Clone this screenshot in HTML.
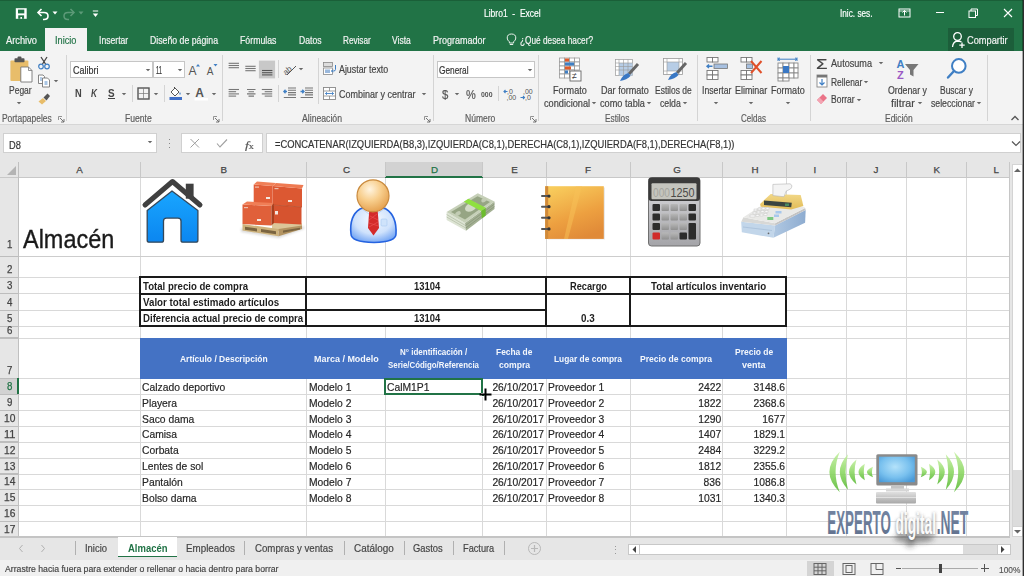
<!DOCTYPE html>
<html><head><meta charset="utf-8"><style>
html,body{margin:0;padding:0;width:1024px;height:576px;overflow:hidden;background:#fff;}
body{position:relative;font-family:"Liberation Sans",sans-serif;}
</style></head><body>
<div style="position:absolute;left:0.00px;top:0.00px;width:1024.00px;height:51.25px;background:#217346;"></div>
<div style="position:absolute;left:0.00px;top:0.00px;width:1024.00px;height:1.20px;background:#1a5f38;"></div>
<div style="position:absolute;left:45.25px;top:28.10px;width:42.00px;height:23.15px;background:#f3f3f3;"></div>
<div style="position:absolute;left:947.50px;top:28.00px;width:66.10px;height:23.25px;background:#1c5e3a;"></div>
<div id="t0" style="position:absolute;left:483.60px;top:8.36px;font-size:10.5px;line-height:10.5px;font-family:'Liberation Sans', sans-serif;font-weight:400;color:#ffffff;white-space:nowrap;transform:scaleX(0.8089);transform-origin:0 0;-webkit-text-stroke:0.18px #ffffff;">Libro1&nbsp;&nbsp;-&nbsp;&nbsp;Excel</div>
<div id="t1" style="position:absolute;left:839.50px;top:8.11px;font-size:10.5px;line-height:10.5px;font-family:'Liberation Sans', sans-serif;font-weight:400;color:#ffffff;white-space:nowrap;transform:scaleX(0.7843);transform-origin:0 0;-webkit-text-stroke:0.18px #ffffff;">Inic. ses.</div>
<div id="t2" style="position:absolute;left:6.00px;top:35.57px;font-size:10.2px;line-height:10.2px;font-family:'Liberation Sans', sans-serif;font-weight:400;color:#f4f4f4;white-space:nowrap;transform:scaleX(0.9122);transform-origin:0 0;-webkit-text-stroke:0.18px #f4f4f4;">Archivo</div>
<div id="t3" style="position:absolute;left:98.75px;top:35.57px;font-size:10.2px;line-height:10.2px;font-family:'Liberation Sans', sans-serif;font-weight:400;color:#f4f4f4;white-space:nowrap;transform:scaleX(0.8467);transform-origin:0 0;-webkit-text-stroke:0.18px #f4f4f4;">Insertar</div>
<div id="t4" style="position:absolute;left:150.00px;top:35.57px;font-size:10.2px;line-height:10.2px;font-family:'Liberation Sans', sans-serif;font-weight:400;color:#f4f4f4;white-space:nowrap;transform:scaleX(0.8575);transform-origin:0 0;-webkit-text-stroke:0.18px #f4f4f4;">Diseño de página</div>
<div id="t5" style="position:absolute;left:240.00px;top:35.57px;font-size:10.2px;line-height:10.2px;font-family:'Liberation Sans', sans-serif;font-weight:400;color:#f4f4f4;white-space:nowrap;transform:scaleX(0.8595);transform-origin:0 0;-webkit-text-stroke:0.18px #f4f4f4;">Fórmulas</div>
<div id="t6" style="position:absolute;left:298.50px;top:35.57px;font-size:10.2px;line-height:10.2px;font-family:'Liberation Sans', sans-serif;font-weight:400;color:#f4f4f4;white-space:nowrap;transform:scaleX(0.8451);transform-origin:0 0;-webkit-text-stroke:0.18px #f4f4f4;">Datos</div>
<div id="t7" style="position:absolute;left:342.75px;top:35.57px;font-size:10.2px;line-height:10.2px;font-family:'Liberation Sans', sans-serif;font-weight:400;color:#f4f4f4;white-space:nowrap;transform:scaleX(0.8033);transform-origin:0 0;-webkit-text-stroke:0.18px #f4f4f4;">Revisar</div>
<div id="t8" style="position:absolute;left:392.25px;top:35.57px;font-size:10.2px;line-height:10.2px;font-family:'Liberation Sans', sans-serif;font-weight:400;color:#f4f4f4;white-space:nowrap;transform:scaleX(0.8345);transform-origin:0 0;-webkit-text-stroke:0.18px #f4f4f4;">Vista</div>
<div id="t9" style="position:absolute;left:433.00px;top:35.57px;font-size:10.2px;line-height:10.2px;font-family:'Liberation Sans', sans-serif;font-weight:400;color:#f4f4f4;white-space:nowrap;transform:scaleX(0.8828);transform-origin:0 0;-webkit-text-stroke:0.18px #f4f4f4;">Programador</div>
<div id="t10" style="position:absolute;left:520.25px;top:35.57px;font-size:10.2px;line-height:10.2px;font-family:'Liberation Sans', sans-serif;font-weight:400;color:#f4f4f4;white-space:nowrap;transform:scaleX(0.8107);transform-origin:0 0;-webkit-text-stroke:0.18px #f4f4f4;">¿Qué desea hacer?</div>
<div id="t11" style="position:absolute;left:55.00px;top:35.57px;font-size:10.2px;line-height:10.2px;font-family:'Liberation Sans', sans-serif;font-weight:400;color:#217346;white-space:nowrap;transform:scaleX(0.9035);transform-origin:0 0;-webkit-text-stroke:0.18px #217346;">Inicio</div>
<div id="t12" style="position:absolute;left:967.00px;top:35.57px;font-size:10.2px;line-height:10.2px;font-family:'Liberation Sans', sans-serif;font-weight:400;color:#f4f4f4;white-space:nowrap;transform:scaleX(0.9076);transform-origin:0 0;-webkit-text-stroke:0.18px #f4f4f4;">Compartir</div>
<div style="position:absolute;left:0.00px;top:51.25px;width:1024.00px;height:73.55px;background:#f3f3f3;"></div>
<div style="position:absolute;left:0.00px;top:124.20px;width:1024.00px;height:1.20px;background:#d6d6d6;"></div>
<div style="position:absolute;left:0.00px;top:125.40px;width:1024.00px;height:36.60px;background:#e6e6e6;"></div>
<div style="position:absolute;left:66.20px;top:55.00px;width:1.00px;height:66.00px;background:#d4d4d4;"></div>
<div style="position:absolute;left:221.90px;top:55.00px;width:1.00px;height:66.00px;background:#d4d4d4;"></div>
<div style="position:absolute;left:433.10px;top:55.00px;width:1.00px;height:66.00px;background:#d4d4d4;"></div>
<div style="position:absolute;left:538.25px;top:55.00px;width:1.00px;height:66.00px;background:#d4d4d4;"></div>
<div style="position:absolute;left:696.70px;top:55.00px;width:1.00px;height:66.00px;background:#d4d4d4;"></div>
<div style="position:absolute;left:810.00px;top:55.00px;width:1.00px;height:66.00px;background:#d4d4d4;"></div>
<div style="position:absolute;left:986.50px;top:55.00px;width:1.00px;height:66.00px;background:#d4d4d4;"></div>
<div style="position:absolute;left:131.50px;top:85.00px;width:1.00px;height:17.00px;background:#d4d4d4;"></div>
<div style="position:absolute;left:163.80px;top:85.00px;width:1.00px;height:17.00px;background:#d4d4d4;"></div>
<div style="position:absolute;left:278.10px;top:60.00px;width:1.00px;height:18.00px;background:#d4d4d4;"></div>
<div style="position:absolute;left:278.10px;top:85.00px;width:1.00px;height:17.00px;background:#d4d4d4;"></div>
<div style="position:absolute;left:318.25px;top:58.00px;width:1.00px;height:46.00px;background:#d4d4d4;"></div>
<div style="position:absolute;left:498.40px;top:86.00px;width:1.00px;height:15.00px;background:#d4d4d4;"></div>
<div id="t13" style="position:absolute;left:2.00px;top:113.77px;font-size:10.2px;line-height:10.2px;font-family:'Liberation Sans', sans-serif;font-weight:400;color:#5c5c5c;white-space:nowrap;transform:scaleX(0.8277);transform-origin:0 0;-webkit-text-stroke:0.18px #5c5c5c;">Portapapeles</div>
<div id="t14" style="position:absolute;left:125.00px;top:113.77px;font-size:10.2px;line-height:10.2px;font-family:'Liberation Sans', sans-serif;font-weight:400;color:#5c5c5c;white-space:nowrap;transform:scaleX(0.8449);transform-origin:0 0;-webkit-text-stroke:0.18px #5c5c5c;">Fuente</div>
<div id="t15" style="position:absolute;left:301.70px;top:113.77px;font-size:10.2px;line-height:10.2px;font-family:'Liberation Sans', sans-serif;font-weight:400;color:#5c5c5c;white-space:nowrap;transform:scaleX(0.8508);transform-origin:0 0;-webkit-text-stroke:0.18px #5c5c5c;">Alineación</div>
<div id="t16" style="position:absolute;left:464.70px;top:113.77px;font-size:10.2px;line-height:10.2px;font-family:'Liberation Sans', sans-serif;font-weight:400;color:#5c5c5c;white-space:nowrap;transform:scaleX(0.8362);transform-origin:0 0;-webkit-text-stroke:0.18px #5c5c5c;">Número</div>
<div id="t17" style="position:absolute;left:605.30px;top:113.77px;font-size:10.2px;line-height:10.2px;font-family:'Liberation Sans', sans-serif;font-weight:400;color:#5c5c5c;white-space:nowrap;transform:scaleX(0.8096);transform-origin:0 0;-webkit-text-stroke:0.18px #5c5c5c;">Estilos</div>
<div id="t18" style="position:absolute;left:741.25px;top:113.77px;font-size:10.2px;line-height:10.2px;font-family:'Liberation Sans', sans-serif;font-weight:400;color:#5c5c5c;white-space:nowrap;transform:scaleX(0.7882);transform-origin:0 0;-webkit-text-stroke:0.18px #5c5c5c;">Celdas</div>
<div id="t19" style="position:absolute;left:884.90px;top:113.77px;font-size:10.2px;line-height:10.2px;font-family:'Liberation Sans', sans-serif;font-weight:400;color:#5c5c5c;white-space:nowrap;transform:scaleX(0.8318);transform-origin:0 0;-webkit-text-stroke:0.18px #5c5c5c;">Edición</div>
<div id="t20" style="position:absolute;left:8.60px;top:86.07px;font-size:10.2px;line-height:10.2px;font-family:'Liberation Sans', sans-serif;font-weight:400;color:#444444;white-space:nowrap;transform:scaleX(0.8331);transform-origin:0 0;-webkit-text-stroke:0.18px #444444;">Pegar</div>
<div id="t21" style="position:absolute;left:553.20px;top:86.07px;font-size:10.2px;line-height:10.2px;font-family:'Liberation Sans', sans-serif;font-weight:400;color:#444444;white-space:nowrap;transform:scaleX(0.8909);transform-origin:0 0;-webkit-text-stroke:0.18px #444444;">Formato</div>
<div id="t22" style="position:absolute;left:543.90px;top:98.57px;font-size:10.2px;line-height:10.2px;font-family:'Liberation Sans', sans-serif;font-weight:400;color:#444444;white-space:nowrap;transform:scaleX(0.9042);transform-origin:0 0;-webkit-text-stroke:0.18px #444444;">condicional</div>
<div id="t23" style="position:absolute;left:601.10px;top:86.07px;font-size:10.2px;line-height:10.2px;font-family:'Liberation Sans', sans-serif;font-weight:400;color:#444444;white-space:nowrap;transform:scaleX(0.8904);transform-origin:0 0;-webkit-text-stroke:0.18px #444444;">Dar formato</div>
<div id="t24" style="position:absolute;left:600.00px;top:98.57px;font-size:10.2px;line-height:10.2px;font-family:'Liberation Sans', sans-serif;font-weight:400;color:#444444;white-space:nowrap;transform:scaleX(0.9008);transform-origin:0 0;-webkit-text-stroke:0.18px #444444;">como tabla</div>
<div id="t25" style="position:absolute;left:655.00px;top:86.07px;font-size:10.2px;line-height:10.2px;font-family:'Liberation Sans', sans-serif;font-weight:400;color:#444444;white-space:nowrap;transform:scaleX(0.8308);transform-origin:0 0;-webkit-text-stroke:0.18px #444444;">Estilos de</div>
<div id="t26" style="position:absolute;left:660.00px;top:98.57px;font-size:10.2px;line-height:10.2px;font-family:'Liberation Sans', sans-serif;font-weight:400;color:#444444;white-space:nowrap;transform:scaleX(0.8539);transform-origin:0 0;-webkit-text-stroke:0.18px #444444;">celda</div>
<div id="t27" style="position:absolute;left:701.70px;top:86.07px;font-size:10.2px;line-height:10.2px;font-family:'Liberation Sans', sans-serif;font-weight:400;color:#444444;white-space:nowrap;transform:scaleX(0.8510);transform-origin:0 0;-webkit-text-stroke:0.18px #444444;">Insertar</div>
<div id="t28" style="position:absolute;left:735.00px;top:86.07px;font-size:10.2px;line-height:10.2px;font-family:'Liberation Sans', sans-serif;font-weight:400;color:#444444;white-space:nowrap;transform:scaleX(0.8751);transform-origin:0 0;-webkit-text-stroke:0.18px #444444;">Eliminar</div>
<div id="t29" style="position:absolute;left:771.00px;top:86.07px;font-size:10.2px;line-height:10.2px;font-family:'Liberation Sans', sans-serif;font-weight:400;color:#444444;white-space:nowrap;transform:scaleX(0.8883);transform-origin:0 0;-webkit-text-stroke:0.18px #444444;">Formato</div>
<div id="t30" style="position:absolute;left:888.30px;top:86.07px;font-size:10.2px;line-height:10.2px;font-family:'Liberation Sans', sans-serif;font-weight:400;color:#444444;white-space:nowrap;transform:scaleX(0.8599);transform-origin:0 0;-webkit-text-stroke:0.18px #444444;">Ordenar y</div>
<div id="t31" style="position:absolute;left:891.00px;top:98.57px;font-size:10.2px;line-height:10.2px;font-family:'Liberation Sans', sans-serif;font-weight:400;color:#444444;white-space:nowrap;transform:scaleX(1.0490);transform-origin:0 0;-webkit-text-stroke:0.18px #444444;">filtrar</div>
<div id="t32" style="position:absolute;left:940.20px;top:86.07px;font-size:10.2px;line-height:10.2px;font-family:'Liberation Sans', sans-serif;font-weight:400;color:#444444;white-space:nowrap;transform:scaleX(0.8300);transform-origin:0 0;-webkit-text-stroke:0.18px #444444;">Buscar y</div>
<div id="t33" style="position:absolute;left:931.40px;top:98.57px;font-size:10.2px;line-height:10.2px;font-family:'Liberation Sans', sans-serif;font-weight:400;color:#444444;white-space:nowrap;transform:scaleX(0.8539);transform-origin:0 0;-webkit-text-stroke:0.18px #444444;">seleccionar</div>
<div id="t34" style="position:absolute;left:830.70px;top:58.97px;font-size:10.2px;line-height:10.2px;font-family:'Liberation Sans', sans-serif;font-weight:400;color:#444444;white-space:nowrap;transform:scaleX(0.8937);transform-origin:0 0;-webkit-text-stroke:0.18px #444444;">Autosuma</div>
<div id="t35" style="position:absolute;left:830.70px;top:77.67px;font-size:10.2px;line-height:10.2px;font-family:'Liberation Sans', sans-serif;font-weight:400;color:#444444;white-space:nowrap;transform:scaleX(0.8247);transform-origin:0 0;-webkit-text-stroke:0.18px #444444;">Rellenar</div>
<div id="t36" style="position:absolute;left:830.70px;top:95.47px;font-size:10.2px;line-height:10.2px;font-family:'Liberation Sans', sans-serif;font-weight:400;color:#444444;white-space:nowrap;transform:scaleX(0.8336);transform-origin:0 0;-webkit-text-stroke:0.18px #444444;">Borrar</div>
<div id="t37" style="position:absolute;left:338.60px;top:65.17px;font-size:10.2px;line-height:10.2px;font-family:'Liberation Sans', sans-serif;font-weight:400;color:#444444;white-space:nowrap;transform:scaleX(0.8689);transform-origin:0 0;-webkit-text-stroke:0.18px #444444;">Ajustar texto</div>
<div id="t38" style="position:absolute;left:338.60px;top:89.97px;font-size:10.2px;line-height:10.2px;font-family:'Liberation Sans', sans-serif;font-weight:400;color:#444444;white-space:nowrap;transform:scaleX(0.8820);transform-origin:0 0;-webkit-text-stroke:0.18px #444444;">Combinar y centrar</div>
<svg style="position:absolute;left:16.00px;top:100.70px;" width="6" height="4" viewBox="0 0 6 4"><path d="M0.80 1 L5.20 1 L3 3.20 Z" fill="#666"/></svg>
<svg style="position:absolute;left:53.00px;top:79.00px;" width="6" height="4" viewBox="0 0 6 4"><path d="M0.80 1 L5.20 1 L3 3.20 Z" fill="#666"/></svg>
<svg style="position:absolute;left:120.50px;top:92.00px;" width="6" height="4" viewBox="0 0 6 4"><path d="M0.80 1 L5.20 1 L3 3.20 Z" fill="#666"/></svg>
<svg style="position:absolute;left:153.00px;top:92.00px;" width="6" height="4" viewBox="0 0 6 4"><path d="M0.80 1 L5.20 1 L3 3.20 Z" fill="#666"/></svg>
<svg style="position:absolute;left:185.00px;top:92.00px;" width="6" height="4" viewBox="0 0 6 4"><path d="M0.80 1 L5.20 1 L3 3.20 Z" fill="#666"/></svg>
<svg style="position:absolute;left:211.00px;top:92.00px;" width="6" height="4" viewBox="0 0 6 4"><path d="M0.80 1 L5.20 1 L3 3.20 Z" fill="#666"/></svg>
<svg style="position:absolute;left:298.00px;top:67.00px;" width="6" height="4" viewBox="0 0 6 4"><path d="M0.80 1 L5.20 1 L3 3.20 Z" fill="#666"/></svg>
<svg style="position:absolute;left:421.30px;top:92.00px;" width="6" height="4" viewBox="0 0 6 4"><path d="M0.80 1 L5.20 1 L3 3.20 Z" fill="#666"/></svg>
<svg style="position:absolute;left:454.20px;top:92.00px;" width="6" height="4" viewBox="0 0 6 4"><path d="M0.80 1 L5.20 1 L3 3.20 Z" fill="#666"/></svg>
<svg style="position:absolute;left:590.90px;top:100.50px;" width="6" height="4" viewBox="0 0 6 4"><path d="M0.80 1 L5.20 1 L3 3.20 Z" fill="#666"/></svg>
<svg style="position:absolute;left:646.00px;top:100.50px;" width="6" height="4" viewBox="0 0 6 4"><path d="M0.80 1 L5.20 1 L3 3.20 Z" fill="#666"/></svg>
<svg style="position:absolute;left:682.00px;top:100.50px;" width="6" height="4" viewBox="0 0 6 4"><path d="M0.80 1 L5.20 1 L3 3.20 Z" fill="#666"/></svg>
<svg style="position:absolute;left:713.25px;top:101.00px;" width="6" height="4" viewBox="0 0 6 4"><path d="M0.80 1 L5.20 1 L3 3.20 Z" fill="#666"/></svg>
<svg style="position:absolute;left:748.00px;top:101.00px;" width="6" height="4" viewBox="0 0 6 4"><path d="M0.80 1 L5.20 1 L3 3.20 Z" fill="#666"/></svg>
<svg style="position:absolute;left:784.60px;top:101.00px;" width="6" height="4" viewBox="0 0 6 4"><path d="M0.80 1 L5.20 1 L3 3.20 Z" fill="#666"/></svg>
<svg style="position:absolute;left:878.00px;top:61.00px;" width="6" height="4" viewBox="0 0 6 4"><path d="M0.80 1 L5.20 1 L3 3.20 Z" fill="#666"/></svg>
<svg style="position:absolute;left:863.00px;top:79.50px;" width="6" height="4" viewBox="0 0 6 4"><path d="M0.80 1 L5.20 1 L3 3.20 Z" fill="#666"/></svg>
<svg style="position:absolute;left:855.50px;top:97.50px;" width="6" height="4" viewBox="0 0 6 4"><path d="M0.80 1 L5.20 1 L3 3.20 Z" fill="#666"/></svg>
<svg style="position:absolute;left:916.60px;top:100.50px;" width="6" height="4" viewBox="0 0 6 4"><path d="M0.80 1 L5.20 1 L3 3.20 Z" fill="#666"/></svg>
<svg style="position:absolute;left:976.30px;top:100.50px;" width="6" height="4" viewBox="0 0 6 4"><path d="M0.80 1 L5.20 1 L3 3.20 Z" fill="#666"/></svg>
<div style="position:absolute;left:70.25px;top:60.60px;width:83.15px;height:17.80px;background:#ffffff;box-sizing:border-box;border:1px solid #c6c6c6;"></div>
<div style="position:absolute;left:152.90px;top:60.60px;width:32.60px;height:17.80px;background:#ffffff;box-sizing:border-box;border:1px solid #c6c6c6;"></div>
<div style="position:absolute;left:437.00px;top:60.60px;width:97.60px;height:17.80px;background:#ffffff;box-sizing:border-box;border:1px solid #c6c6c6;"></div>
<div id="t39" style="position:absolute;left:72.60px;top:64.91px;font-size:10.5px;line-height:10.5px;font-family:'Liberation Sans', sans-serif;font-weight:400;color:#333;white-space:nowrap;transform:scaleX(0.8533);transform-origin:0 0;-webkit-text-stroke:0.18px #333;">Calibri</div>
<div id="t40" style="position:absolute;left:156.00px;top:64.91px;font-size:10.5px;line-height:10.5px;font-family:'Liberation Sans', sans-serif;font-weight:400;color:#333;white-space:nowrap;transform:scaleX(0.5501);transform-origin:0 0;-webkit-text-stroke:0.18px #333;">11</div>
<div id="t41" style="position:absolute;left:439.40px;top:64.91px;font-size:10.5px;line-height:10.5px;font-family:'Liberation Sans', sans-serif;font-weight:400;color:#333;white-space:nowrap;transform:scaleX(0.7923);transform-origin:0 0;-webkit-text-stroke:0.18px #333;">General</div>
<svg style="position:absolute;left:144.75px;top:67.50px;" width="6" height="4" viewBox="0 0 6 4"><path d="M0.80 1 L5.20 1 L3 3.20 Z" fill="#666"/></svg>
<svg style="position:absolute;left:177.00px;top:67.50px;" width="6" height="4" viewBox="0 0 6 4"><path d="M0.80 1 L5.20 1 L3 3.20 Z" fill="#666"/></svg>
<svg style="position:absolute;left:526.70px;top:67.50px;" width="6" height="4" viewBox="0 0 6 4"><path d="M0.80 1 L5.20 1 L3 3.20 Z" fill="#666"/></svg>
<svg style="position:absolute;left:14.00px;top:7.00px;" width="14" height="14" viewBox="0 0 14 14"><rect x="1.8" y="1.2" width="10.9" height="10.6" fill="#fff"/><rect x="4" y="2.6" width="6.3" height="3.8" fill="#217346"/><rect x="4.2" y="8.3" width="5.9" height="3.5" fill="#217346"/><rect x="6.4" y="10" width="1.6" height="1.8" fill="#fff"/></svg>
<svg style="position:absolute;left:36.00px;top:7.00px;" width="14" height="14" viewBox="0 0 14 14"><path d="M2.5 5.5 H8 Q12 5.5 12 9 Q12 12.5 8 12.5 H7" fill="none" stroke="#fff" stroke-width="1.6"/><path d="M5.5 2 L2 5.5 L5.5 9" fill="none" stroke="#fff" stroke-width="1.6"/></svg>
<svg style="position:absolute;left:51.50px;top:11.00px;" width="6" height="4" viewBox="0 0 6 4"><path d="M0.5 0.5 H5.5 L3 3.5 Z" fill="#fff"/></svg>
<svg style="position:absolute;left:62.00px;top:7.00px;" width="14" height="14" viewBox="0 0 14 14"><path d="M11.5 5.5 H6 Q2 5.5 2 9 Q2 12.5 6 12.5 H7" fill="none" stroke="#5d9a78" stroke-width="1.5"/><path d="M8.5 2 L12 5.5 L8.5 9" fill="none" stroke="#5d9a78" stroke-width="1.5"/></svg>
<svg style="position:absolute;left:78.00px;top:11.00px;" width="6" height="4" viewBox="0 0 6 4"><path d="M0.5 0.5 H5.5 L3 3.5 Z" fill="#5d9a78"/></svg>
<svg style="position:absolute;left:92.00px;top:10.00px;" width="7" height="8" viewBox="0 0 7 8"><path d="M0.8 1 H6.2" stroke="#fff" stroke-width="1"/><path d="M0.8 3.5 H6.2 L3.5 7 Z" fill="#fff"/></svg>
<svg style="position:absolute;left:898.00px;top:8.00px;" width="13" height="10" viewBox="0 0 13 10"><rect x="1" y="1" width="11" height="8" fill="none" stroke="#fff" stroke-width="1"/><path d="M6.5 2.5 V7.5 M4.5 4.5 L6.5 2.5 L8.5 4.5" fill="none" stroke="#fff" stroke-width="1"/><path d="M1 3 H12" stroke="#fff" stroke-width="0.8"/></svg>
<div style="position:absolute;left:935.50px;top:12.30px;width:8.00px;height:1.00px;background:#ffffff;"></div>
<svg style="position:absolute;left:968.00px;top:8.00px;" width="11" height="10" viewBox="0 0 11 10"><rect x="1" y="3" width="6.5" height="6.5" fill="none" stroke="#fff" stroke-width="1"/><path d="M3 3 V1 H9.5 V7.5 H7.5" fill="none" stroke="#fff" stroke-width="1"/></svg>
<svg style="position:absolute;left:1003.00px;top:8.00px;" width="10" height="10" viewBox="0 0 10 10"><path d="M1 1 L9 9 M9 1 L1 9" stroke="#fff" stroke-width="1.1"/></svg>
<svg style="position:absolute;left:506.00px;top:33.00px;" width="11" height="13" viewBox="0 0 11 13"><path d="M5.5 1 Q9.8 1 9.8 5 Q9.8 7.2 7.6 8.8 V10 H3.4 V8.8 Q1.2 7.2 1.2 5 Q1.2 1 5.5 1 Z" fill="none" stroke="#e8f0ea" stroke-width="1"/><path d="M3.8 11.5 H7.2" stroke="#e8f0ea" stroke-width="1"/></svg>
<svg style="position:absolute;left:951.00px;top:31.00px;" width="15" height="18" viewBox="0 0 15 18"><circle cx="6.5" cy="5.5" r="3.8" fill="none" stroke="#fff" stroke-width="1.3"/><path d="M1.5 16 Q2 10.5 6.5 10 Q9 10 10.5 11" fill="none" stroke="#fff" stroke-width="1.3"/><path d="M11 11.5 V17 M8.3 14.2 H13.7" stroke="#fff" stroke-width="1.3"/></svg>
<svg style="position:absolute;left:9.00px;top:56.00px;" width="26" height="28" viewBox="0 0 26 28"><rect x="1.4" y="4.5" width="18" height="20.5" rx="1" fill="#e8bd6a"/>
<rect x="5.5" y="2.3" width="10" height="4" rx="0.8" fill="#555"/><rect x="8.5" y="0.6" width="4" height="2.5" rx="1" fill="#555"/>
<path d="M11.8 11 H19.5 L23 14.5 V26 H11.8 Z" fill="#fff" stroke="#777" stroke-width="0.9"/><path d="M19.5 11 V14.5 H23" fill="none" stroke="#777" stroke-width="0.8"/></svg>
<svg style="position:absolute;left:37.00px;top:56.00px;" width="14" height="14" viewBox="0 0 14 14"><path d="M4 1 L8.5 8 M10 1 L5.5 8" stroke="#444" stroke-width="1.3"/><circle cx="4" cy="10.5" r="2.3" fill="none" stroke="#3f7fc4" stroke-width="1.2"/><circle cx="10" cy="10.5" r="2.3" fill="none" stroke="#3f7fc4" stroke-width="1.2"/></svg>
<svg style="position:absolute;left:37.00px;top:74.00px;" width="14" height="14" viewBox="0 0 14 14"><path d="M1.5 1 H6 L7.5 2.5 V9.5 H1.5 Z" fill="#fff" stroke="#777" stroke-width="0.9"/><path d="M5.5 4 H10.5 L12.5 6 V13 H5.5 Z" fill="#fff" stroke="#777" stroke-width="0.9"/><path d="M7.5 8 H10.5 M7.5 10 H10.5" stroke="#3f7fc4" stroke-width="0.9"/><path d="M3 4 H5 M3 6 H5" stroke="#3f7fc4" stroke-width="0.8"/></svg>
<svg style="position:absolute;left:37.00px;top:92.00px;" width="14" height="14" viewBox="0 0 14 14"><path d="M1.5 9.5 L6 6 L9 9 L5 12.5 Z" fill="#e8bd6a"/><path d="M6.5 5.5 L10.5 1.5 L13 4 L9.5 8.5 Z" fill="#555"/></svg>
<svg style="position:absolute;left:188.00px;top:63.00px;" width="12" height="13" viewBox="0 0 12 13"><text x="0.5" y="11.5" font-family="Liberation Sans" font-size="12" fill="#555">A</text><path d="M8 3.5 L10 1 L12 3.5 Z" fill="#3f7fc4"/></svg>
<svg style="position:absolute;left:205.00px;top:63.00px;" width="13" height="13" viewBox="0 0 13 13"><text x="1.8" y="11.5" font-family="Liberation Sans" font-size="10" fill="#555">A</text><path d="M8.5 1 H12.5 L10.5 3.5 Z" fill="#3f7fc4"/></svg>
<div id="t42" style="position:absolute;left:75.00px;top:87.99px;font-size:11px;line-height:11px;font-family:'Liberation Sans', sans-serif;font-weight:700;color:#444;white-space:nowrap;transform:scaleX(0.8424);transform-origin:0 0;">N</div>
<div id="t43" style="position:absolute;left:91.00px;top:87.99px;font-size:11px;line-height:11px;font-family:'Liberation Sans', sans-serif;font-weight:700;color:#444;white-space:nowrap;transform:scaleX(0.7544);transform-origin:0 0;font-style:italic;">K</div>
<div id="t44" style="position:absolute;left:108.00px;top:87.99px;font-size:11px;line-height:11px;font-family:'Liberation Sans', sans-serif;font-weight:700;color:#444;white-space:nowrap;transform:scaleX(0.8987);transform-origin:0 0;">S</div>
<div style="position:absolute;left:108.00px;top:98.20px;width:7.00px;height:0.90px;background:#444;"></div>
<svg style="position:absolute;left:137.00px;top:87.00px;" width="13" height="13" viewBox="0 0 13 13"><rect x="1" y="1" width="11" height="11" fill="none" stroke="#555" stroke-width="1.4"/><path d="M6.5 1 V12 M1 6.5 H12" stroke="#777" stroke-width="0.7"/></svg>
<svg style="position:absolute;left:168.00px;top:85.00px;" width="15" height="16" viewBox="0 0 15 16"><path d="M3 7 L7 3 L11 7 L7 11 Z" fill="#fff" stroke="#444" stroke-width="0.9"/><path d="M6 2 L7 3" stroke="#444"/><path d="M12 7 Q13.5 9 12 10 Q10.5 9 12 7 Z" fill="#3f7fc4"/><rect x="1.5" y="12" width="12.5" height="3" fill="#3f6fc8"/></svg>
<svg style="position:absolute;left:194.00px;top:86.00px;" width="15" height="15" viewBox="0 0 15 15"><text x="1.2" y="11" font-family="Liberation Sans" font-weight="700" font-size="12" fill="#555">A</text><rect x="0.5" y="12" width="13.5" height="2.5" fill="#fff"/></svg>
<svg style="position:absolute;left:57.50px;top:115.50px;" width="7" height="7" viewBox="0 0 7 7"><path d="M0.5 0.5 H4 M0.5 0.5 V4" stroke="#888" stroke-width="0.9"/><path d="M2 2 L6 6 M6 3 V6 H3" fill="none" stroke="#666" stroke-width="0.9"/></svg>
<svg style="position:absolute;left:213.00px;top:115.50px;" width="7" height="7" viewBox="0 0 7 7"><path d="M0.5 0.5 H4 M0.5 0.5 V4" stroke="#888" stroke-width="0.9"/><path d="M2 2 L6 6 M6 3 V6 H3" fill="none" stroke="#666" stroke-width="0.9"/></svg>
<svg style="position:absolute;left:423.50px;top:115.50px;" width="7" height="7" viewBox="0 0 7 7"><path d="M0.5 0.5 H4 M0.5 0.5 V4" stroke="#888" stroke-width="0.9"/><path d="M2 2 L6 6 M6 3 V6 H3" fill="none" stroke="#666" stroke-width="0.9"/></svg>
<svg style="position:absolute;left:529.50px;top:115.50px;" width="7" height="7" viewBox="0 0 7 7"><path d="M0.5 0.5 H4 M0.5 0.5 V4" stroke="#888" stroke-width="0.9"/><path d="M2 2 L6 6 M6 3 V6 H3" fill="none" stroke="#666" stroke-width="0.9"/></svg>
<svg style="position:absolute;left:226.00px;top:58.00px;" width="60" height="50" viewBox="0 0 60 50"><rect x="32.9" y="2.6" width="16.2" height="17.8" fill="#c8c8c8"/><path d="M2.60 5.30 H13.00" stroke="#777" stroke-width="1.1"/><path d="M2.60 7.50 H13.00" stroke="#777" stroke-width="1.1"/><path d="M2.60 9.70 H13.00" stroke="#777" stroke-width="1.1"/><path d="M19.30 8.30 H29.70" stroke="#777" stroke-width="1.1"/><path d="M19.30 10.50 H29.70" stroke="#777" stroke-width="1.1"/><path d="M19.30 12.70 H29.70" stroke="#777" stroke-width="1.1"/><path d="M36.00 12.50 H46.40" stroke="#555" stroke-width="1.1"/><path d="M36.00 14.70 H46.40" stroke="#555" stroke-width="1.1"/><path d="M36.00 16.90 H46.40" stroke="#555" stroke-width="1.1"/><path d="M2.60 31.50 H13.00" stroke="#777" stroke-width="1.1"/><path d="M2.60 33.70 H10.10" stroke="#777" stroke-width="1.1"/><path d="M2.60 35.90 H13.00" stroke="#777" stroke-width="1.1"/><path d="M2.60 38.10 H10.10" stroke="#777" stroke-width="1.1"/><path d="M21 31.5 H29.5 M22.5 33.7 H28 M21 35.9 H29.5 M22.5 38.1 H28" stroke="#777" stroke-width="1.1"/><path d="M35.80 31.50 H46.20" stroke="#777" stroke-width="1.1"/><path d="M38.70 33.70 H46.20" stroke="#777" stroke-width="1.1"/><path d="M35.80 35.90 H46.20" stroke="#777" stroke-width="1.1"/><path d="M38.70 38.10 H46.20" stroke="#777" stroke-width="1.1"/></svg>
<svg style="position:absolute;left:283.00px;top:62.00px;" width="20" height="14" viewBox="0 0 20 14"><text x="0" y="10" font-family="Liberation Sans" font-size="8" fill="#555" transform="rotate(-40 6 8)">ab</text><path d="M4 13 L13 4" stroke="#555" stroke-width="1"/></svg>
<svg style="position:absolute;left:283.00px;top:87.00px;" width="32" height="14" viewBox="0 0 32 14"><path d="M5 1 H13 M5 3.3 H13 M5 5.6 H13 M5 7.9 H13 M0.8 10.5 H13" stroke="#777" stroke-width="1.1"/><path d="M0.8 4.5 H4 M2.5 2.8 L0.8 4.5 L2.5 6.2" fill="none" stroke="#3f7fc4" stroke-width="1.3"/><path d="M22 1 H30 M22 3.3 H30 M22 5.6 H30 M22 7.9 H30 M17.6 10.5 H30" stroke="#777" stroke-width="1.1"/><path d="M17.5 4.5 H21 M19.3 2.8 L21 4.5 L19.3 6.2" fill="none" stroke="#3f7fc4" stroke-width="1.3"/></svg>
<svg style="position:absolute;left:322.00px;top:61.00px;" width="16" height="16" viewBox="0 0 16 16"><rect x="1.5" y="1.5" width="9" height="4" fill="#ddd" stroke="#888" stroke-width="0.8"/><rect x="1.5" y="7" width="9" height="6.5" fill="#fff" stroke="#888" stroke-width="0.8"/><rect x="3" y="8.5" width="5" height="3.5" fill="#9ab8dc"/><path d="M13.5 4 V8.5 Q13.5 10 11.5 10 H9.5 M10.8 8.7 L9.5 10 L10.8 11.3" fill="none" stroke="#3f7fc4" stroke-width="1"/></svg>
<svg style="position:absolute;left:322.00px;top:86.00px;" width="15" height="15" viewBox="0 0 15 15"><rect x="1.5" y="1.5" width="12" height="12" fill="#fff" stroke="#888" stroke-width="0.9"/><path d="M1.5 5 H13.5 M1.5 10 H13.5 M7.5 1.5 V5 M7.5 10 V13.5" stroke="#888" stroke-width="0.8"/><path d="M3.5 7.5 H11.5 M5 6.2 L3.5 7.5 L5 8.8 M10 6.2 L11.5 7.5 L10 8.8" fill="none" stroke="#3f7fc4" stroke-width="0.9"/></svg>
<div id="t45" style="position:absolute;left:442.20px;top:88.92px;font-size:12.5px;line-height:12.5px;font-family:'Liberation Sans', sans-serif;font-weight:400;color:#555;white-space:nowrap;transform:scaleX(0.9061);transform-origin:0 0;-webkit-text-stroke:0.18px #555;">$</div>
<div id="t46" style="position:absolute;left:465.80px;top:88.92px;font-size:12.5px;line-height:12.5px;font-family:'Liberation Sans', sans-serif;font-weight:400;color:#555;white-space:nowrap;transform:scaleX(0.8809);transform-origin:0 0;-webkit-text-stroke:0.18px #555;">%</div>
<div id="t47" style="position:absolute;left:481.00px;top:90.65px;font-size:7.5px;line-height:7.5px;font-family:'Liberation Sans', sans-serif;font-weight:700;color:#555;white-space:nowrap;transform:scaleX(0.9189);transform-origin:0 0;">000</div>
<svg style="position:absolute;left:503.00px;top:87.00px;" width="30" height="14" viewBox="0 0 30 14"><text x="4" y="6.5" font-family="Liberation Sans" font-size="7" fill="#555">,0</text><text x="3.5" y="12.5" font-family="Liberation Sans" font-size="7" fill="#555">,00</text><path d="M1 4.5 H4.5 M2.5 3 L1 4.5 L2.5 6" fill="none" stroke="#3f7fc4" stroke-width="1.1"/><text x="20" y="6.5" font-family="Liberation Sans" font-size="7" fill="#555">,00</text><text x="22" y="12.5" font-family="Liberation Sans" font-size="7" fill="#555">,0</text><path d="M17.5 10.5 H21.5 M20 9 L21.5 10.5 L20 12" fill="none" stroke="#3f7fc4" stroke-width="1.1"/></svg>
<svg style="position:absolute;left:558.00px;top:57.00px;" width="26" height="26" viewBox="0 0 26 26"><g fill="#fff" stroke="#999" stroke-width="0.8">
<rect x="1.5" y="1" width="5" height="4"/><rect x="6.5" y="1" width="5" height="4"/><rect x="11.5" y="1" width="5" height="4"/><rect x="16.5" y="1" width="5" height="4"/>
<rect x="1.5" y="5" width="5" height="4"/><rect x="6.5" y="5" width="5" height="4"/><rect x="11.5" y="5" width="5" height="4"/><rect x="16.5" y="5" width="5" height="4"/>
<rect x="1.5" y="9" width="5" height="4"/><rect x="6.5" y="9" width="5" height="4"/><rect x="11.5" y="9" width="5" height="4"/><rect x="16.5" y="9" width="5" height="4"/>
<rect x="1.5" y="13" width="5" height="4"/><rect x="6.5" y="13" width="5" height="4"/><rect x="11.5" y="13" width="5" height="4"/>
<rect x="1.5" y="17" width="5" height="4"/><rect x="6.5" y="17" width="5" height="4"/></g>
<rect x="7" y="1.5" width="4" height="3" fill="#e05a2a"/><rect x="7" y="5.5" width="9" height="3" fill="#3f7fc4"/><rect x="7" y="9.5" width="6" height="3" fill="#e05a2a"/><rect x="7" y="13.5" width="3" height="3" fill="#3f7fc4"/>
<rect x="12" y="14" width="11" height="10" fill="#fff" stroke="#666" stroke-width="0.9"/><text x="14" y="22" font-family="Liberation Sans" font-size="9" fill="#444">≠</text></svg>
<svg style="position:absolute;left:614.00px;top:58.00px;" width="26" height="26" viewBox="0 0 26 26"><g fill="#fff" stroke="#999" stroke-width="0.7"><rect x="1.5" y="1.5" width="17" height="16"/></g>
<rect x="5" y="5" width="13.5" height="12.5" fill="#b7cde6"/>
<path d="M1.5 5 H18.5 M1.5 8.5 H18.5 M1.5 12 H18.5 M5 1.5 V17.5 M9.5 1.5 V17.5 M14 1.5 V17.5" stroke="#999" stroke-width="0.6"/>
<path d="M24 6 L15 16" stroke="#666" stroke-width="3"/><path d="M14.5 15 Q9 16 6 23 Q13 22 16.5 18 Z" fill="#3a78c4"/></svg>
<svg style="position:absolute;left:662.00px;top:57.00px;" width="26" height="26" viewBox="0 0 26 26"><rect x="1.5" y="1.5" width="19" height="16" fill="#fff" stroke="#999" stroke-width="0.8"/>
<rect x="5" y="5" width="12" height="9" fill="#b7cde6"/><path d="M1.5 5 H20.5 M1.5 14 H20.5 M5 1.5 V17.5 M17 1.5 V17.5" stroke="#999" stroke-width="0.6"/>
<path d="M24 6 L15 16" stroke="#666" stroke-width="3"/><path d="M14.5 15 Q9 16 6 23 Q13 22 16.5 18 Z" fill="#3a78c4"/></svg>
<svg style="position:absolute;left:705.00px;top:56.00px;" width="24" height="26" viewBox="0 0 24 26"><g fill="#fff" stroke="#777" stroke-width="0.9"><rect x="2" y="1.5" width="5.5" height="4.5"/><rect x="7.5" y="1.5" width="5.5" height="4.5"/>
<rect x="2" y="14.5" width="5.5" height="4.5"/><rect x="7.5" y="14.5" width="5.5" height="4.5"/><rect x="2" y="19" width="5.5" height="4.5"/><rect x="7.5" y="19" width="5.5" height="4.5"/></g>
<rect x="9" y="8" width="13.5" height="4.5" fill="#a7c0e0" stroke="#777" stroke-width="0.8"/><path d="M2 10.2 H7.5 M4 8.5 L2 10.2 L4 12" fill="none" stroke="#3f7fc4" stroke-width="1.4"/></svg>
<svg style="position:absolute;left:739.00px;top:56.00px;" width="26" height="26" viewBox="0 0 26 26"><g fill="#fff" stroke="#777" stroke-width="0.9"><rect x="2" y="1.5" width="5.5" height="4.5"/><rect x="7.5" y="1.5" width="5.5" height="4.5"/>
<rect x="2" y="14.5" width="5.5" height="4.5"/><rect x="7.5" y="14.5" width="5.5" height="4.5"/><rect x="2" y="19" width="5.5" height="4.5"/><rect x="7.5" y="19" width="5.5" height="4.5"/></g>
<rect x="7.5" y="8" width="6" height="4.5" fill="#a7c0e0" stroke="#777" stroke-width="0.8"/><path d="M12 5 L22.5 17 M22.5 5 L12 17" stroke="#e0502a" stroke-width="2"/></svg>
<svg style="position:absolute;left:776.00px;top:55.00px;" width="24" height="28" viewBox="0 0 24 28"><path d="M2 2.5 V6 M21 2.5 V6 M2 4.2 H21 M4 2.8 L2 4.2 L4 5.6 M19 2.8 L21 4.2 L19 5.6" fill="none" stroke="#3f7fc4" stroke-width="1"/>
<g fill="#fff" stroke="#888" stroke-width="0.9"><rect x="2" y="8" width="5" height="5"/><rect x="7" y="8" width="6" height="5"/><rect x="13" y="8" width="5" height="5"/><rect x="18" y="8" width="4" height="5"/>
<rect x="2" y="13" width="5" height="5"/><rect x="13" y="13" width="5" height="5"/><rect x="18" y="13" width="4" height="5"/>
<rect x="2" y="18" width="5" height="5"/><rect x="7" y="18" width="6" height="5"/><rect x="13" y="18" width="5" height="5"/><rect x="18" y="18" width="4" height="5"/>
<rect x="2" y="23" width="5" height="3"/><rect x="7" y="23" width="6" height="3"/></g>
<rect x="7" y="11" width="6" height="7" fill="#3a78c4"/></svg>
<div id="t48" style="position:absolute;left:816.40px;top:56.28px;font-size:15.5px;line-height:15.5px;font-family:'Liberation Sans', sans-serif;font-weight:400;color:#444;white-space:nowrap;transform:scaleX(1.2091);transform-origin:0 0;-webkit-text-stroke:0.18px #444;">Σ</div>
<svg style="position:absolute;left:816.00px;top:74.00px;" width="12" height="14" viewBox="0 0 12 14"><rect x="1" y="1" width="10" height="12" fill="#fff" stroke="#888" stroke-width="0.9"/><rect x="1" y="1" width="10" height="2.5" fill="#777"/><path d="M6 5 V11 M3.5 8.5 L6 11 L8.5 8.5" fill="none" stroke="#3f7fc4" stroke-width="1.2"/></svg>
<svg style="position:absolute;left:815.00px;top:92.00px;" width="13" height="13" viewBox="0 0 13 13"><path d="M2 8 L8 2 L12 6 L6 12 Z" fill="#ea7387"/><path d="M2 8 L4.5 5.5 L8.5 9.5 L6 12 Z" fill="#f3a4b2"/></svg>
<svg style="position:absolute;left:896.00px;top:57.00px;" width="24" height="24" viewBox="0 0 24 24"><text x="0.5" y="11" font-family="Liberation Sans" font-size="11" font-weight="700" fill="#3f7fc4">A</text><text x="1" y="22" font-family="Liberation Sans" font-size="11" font-weight="700" fill="#9b59c4">Z</text>
<path d="M9 7 H22.5 L17.5 13 V19.5 L14 17.5 V13 Z" fill="#777"/></svg>
<svg style="position:absolute;left:945.00px;top:56.00px;" width="22" height="24" viewBox="0 0 22 24"><circle cx="13.8" cy="9.9" r="6.8" fill="#fff" stroke="#3f7fc4" stroke-width="2"/><path d="M9 15 L3 21.5" stroke="#3f7fc4" stroke-width="2.4" stroke-linecap="round"/></svg>
<svg style="position:absolute;left:1010.00px;top:114.00px;" width="10" height="8" viewBox="0 0 10 8"><path d="M1.5 6 L5 2.5 L8.5 6" fill="none" stroke="#555" stroke-width="1.3"/></svg>
<div style="position:absolute;left:3.40px;top:133.25px;width:153.60px;height:20.00px;background:#ffffff;box-sizing:border-box;border:1px solid #d0d0d0;"></div>
<div id="t49" style="position:absolute;left:8.60px;top:139.91px;font-size:10.5px;line-height:10.5px;font-family:'Liberation Sans', sans-serif;font-weight:400;color:#333;white-space:nowrap;transform:scaleX(0.8856);transform-origin:0 0;-webkit-text-stroke:0.18px #333;">D8</div>
<svg style="position:absolute;left:147.00px;top:140.00px;" width="6" height="4" viewBox="0 0 6 4"><path d="M0.80 1 L5.20 1 L3 3.20 Z" fill="#666"/></svg>
<div style="position:absolute;left:168.50px;top:139.00px;width:1.20px;height:1.20px;background:#888;"></div>
<div style="position:absolute;left:168.50px;top:143.00px;width:1.20px;height:1.20px;background:#888;"></div>
<div style="position:absolute;left:168.50px;top:147.00px;width:1.20px;height:1.20px;background:#888;"></div>
<div style="position:absolute;left:180.50px;top:133.25px;width:82.00px;height:20.00px;background:#ffffff;box-sizing:border-box;border:1px solid #d0d0d0;"></div>
<div style="position:absolute;left:265.60px;top:133.25px;width:755.40px;height:20.00px;background:#ffffff;box-sizing:border-box;border:1px solid #d0d0d0;"></div>
<div id="t50" style="position:absolute;left:274.50px;top:139.78px;font-size:10.3px;line-height:10.3px;font-family:'Liberation Sans', sans-serif;font-weight:400;color:#333;white-space:nowrap;transform:scaleX(0.9104);transform-origin:0 0;-webkit-text-stroke:0.18px #333;">=CONCATENAR(IZQUIERDA(B8,3),IZQUIERDA(C8,1),DERECHA(C8,1),IZQUIERDA(F8,1),DERECHA(F8,1))</div>
<svg style="position:absolute;left:189.00px;top:138.00px;" width="12" height="11" viewBox="0 0 12 11"><path d="M1.5 1 L10 9.5 M10 1 L1.5 9.5" stroke="#a0a0a0" stroke-width="1"/></svg>
<svg style="position:absolute;left:216.00px;top:138.00px;" width="12" height="11" viewBox="0 0 12 11"><path d="M1 5.5 L4 9 L11 1.5" fill="none" stroke="#a0a0a0" stroke-width="1.1"/></svg>
<div id="t51" style="position:absolute;left:244.50px;top:140.19px;font-size:11px;line-height:11px;font-family:'Liberation Serif', serif;font-weight:400;color:#555;white-space:nowrap;transform:scaleX(1.2383);transform-origin:0 0;-webkit-text-stroke:0.18px #555;"><i>f</i><span style="font-size:0.75em">x</span></div>
<svg style="position:absolute;left:1010.50px;top:140.00px;" width="10" height="7" viewBox="0 0 10 7"><path d="M1 1.5 L5 5.5 L9 1.5" fill="none" stroke="#555" stroke-width="1.2"/></svg>
<div style="position:absolute;left:0.00px;top:161.75px;width:1010.00px;height:15.35px;background:#e6e6e6;"></div>
<div style="position:absolute;left:0.00px;top:176.60px;width:1010.00px;height:1.00px;background:#c8c8c8;"></div>
<div style="position:absolute;left:385.25px;top:161.75px;width:97.25px;height:15.35px;background:#d2d2d2;"></div>
<div style="position:absolute;left:385.25px;top:175.60px;width:97.25px;height:2.00px;background:#217346;"></div>
<div style="position:absolute;left:139.75px;top:161.75px;width:1.00px;height:14.85px;background:#c8c8c8;"></div>
<div id="t52" style="position:absolute;left:76.28px;top:164.90px;font-size:9.8px;line-height:9.8px;font-family:'Liberation Sans', sans-serif;font-weight:400;color:#444;white-space:nowrap;-webkit-text-stroke:0.18px #444;-webkit-text-stroke:0.25px #444;">A</div>
<div style="position:absolute;left:306.10px;top:161.75px;width:1.00px;height:14.85px;background:#c8c8c8;"></div>
<div id="t53" style="position:absolute;left:220.43px;top:164.90px;font-size:9.8px;line-height:9.8px;font-family:'Liberation Sans', sans-serif;font-weight:400;color:#444;white-space:nowrap;-webkit-text-stroke:0.18px #444;-webkit-text-stroke:0.25px #444;">B</div>
<div style="position:absolute;left:384.75px;top:161.75px;width:1.00px;height:14.85px;background:#c8c8c8;"></div>
<div id="t54" style="position:absolute;left:342.93px;top:164.90px;font-size:9.8px;line-height:9.8px;font-family:'Liberation Sans', sans-serif;font-weight:400;color:#444;white-space:nowrap;-webkit-text-stroke:0.18px #444;-webkit-text-stroke:0.25px #444;">C</div>
<div style="position:absolute;left:482.00px;top:161.75px;width:1.00px;height:14.85px;background:#c8c8c8;"></div>
<div id="t55" style="position:absolute;left:430.88px;top:164.90px;font-size:9.8px;line-height:9.8px;font-family:'Liberation Sans', sans-serif;font-weight:400;color:#217346;white-space:nowrap;-webkit-text-stroke:0.18px #217346;-webkit-text-stroke:0.25px #217346;">D</div>
<div style="position:absolute;left:545.50px;top:161.75px;width:1.00px;height:14.85px;background:#c8c8c8;"></div>
<div id="t56" style="position:absolute;left:511.25px;top:164.90px;font-size:9.8px;line-height:9.8px;font-family:'Liberation Sans', sans-serif;font-weight:400;color:#444;white-space:nowrap;-webkit-text-stroke:0.18px #444;-webkit-text-stroke:0.25px #444;">E</div>
<div style="position:absolute;left:629.60px;top:161.75px;width:1.00px;height:14.85px;background:#c8c8c8;"></div>
<div id="t57" style="position:absolute;left:585.05px;top:164.90px;font-size:9.8px;line-height:9.8px;font-family:'Liberation Sans', sans-serif;font-weight:400;color:#444;white-space:nowrap;-webkit-text-stroke:0.18px #444;-webkit-text-stroke:0.25px #444;">F</div>
<div style="position:absolute;left:722.00px;top:161.75px;width:1.00px;height:14.85px;background:#c8c8c8;"></div>
<div id="t58" style="position:absolute;left:673.30px;top:164.90px;font-size:9.8px;line-height:9.8px;font-family:'Liberation Sans', sans-serif;font-weight:400;color:#444;white-space:nowrap;-webkit-text-stroke:0.18px #444;-webkit-text-stroke:0.25px #444;">G</div>
<div style="position:absolute;left:786.00px;top:161.75px;width:1.00px;height:14.85px;background:#c8c8c8;"></div>
<div id="t59" style="position:absolute;left:751.50px;top:164.90px;font-size:9.8px;line-height:9.8px;font-family:'Liberation Sans', sans-serif;font-weight:400;color:#444;white-space:nowrap;-webkit-text-stroke:0.18px #444;-webkit-text-stroke:0.25px #444;">H</div>
<div style="position:absolute;left:846.00px;top:161.75px;width:1.00px;height:14.85px;background:#c8c8c8;"></div>
<div id="t60" style="position:absolute;left:813.50px;top:164.90px;font-size:9.8px;line-height:9.8px;font-family:'Liberation Sans', sans-serif;font-weight:400;color:#444;white-space:nowrap;-webkit-text-stroke:0.18px #444;-webkit-text-stroke:0.25px #444;">I</div>
<div style="position:absolute;left:906.10px;top:161.75px;width:1.00px;height:14.85px;background:#c8c8c8;"></div>
<div id="t61" style="position:absolute;left:873.55px;top:164.90px;font-size:9.8px;line-height:9.8px;font-family:'Liberation Sans', sans-serif;font-weight:400;color:#444;white-space:nowrap;-webkit-text-stroke:0.18px #444;-webkit-text-stroke:0.25px #444;">J</div>
<div style="position:absolute;left:966.10px;top:161.75px;width:1.00px;height:14.85px;background:#c8c8c8;"></div>
<div id="t62" style="position:absolute;left:933.60px;top:164.90px;font-size:9.8px;line-height:9.8px;font-family:'Liberation Sans', sans-serif;font-weight:400;color:#444;white-space:nowrap;-webkit-text-stroke:0.18px #444;-webkit-text-stroke:0.25px #444;">K</div>
<div style="position:absolute;left:1009.20px;top:161.75px;width:1.00px;height:14.85px;background:#c8c8c8;"></div>
<div id="t63" style="position:absolute;left:993.60px;top:164.90px;font-size:9.8px;line-height:9.8px;font-family:'Liberation Sans', sans-serif;font-weight:400;color:#444;white-space:nowrap;-webkit-text-stroke:0.18px #444;-webkit-text-stroke:0.25px #444;">L</div>
<div style="position:absolute;left:18.30px;top:177.60px;width:991.40px;height:359.40px;background:#ffffff;"></div>
<div style="position:absolute;left:0.00px;top:177.60px;width:18.30px;height:359.40px;background:#e6e6e6;"></div>
<div style="position:absolute;left:18.30px;top:255.70px;width:991.40px;height:1.00px;background:#d9d9d9;"></div>
<div style="position:absolute;left:0.00px;top:255.60px;width:18.30px;height:1.20px;background:#bdbdbd;"></div>
<div style="position:absolute;left:18.30px;top:277.00px;width:991.40px;height:1.00px;background:#d9d9d9;"></div>
<div style="position:absolute;left:0.00px;top:276.90px;width:18.30px;height:1.20px;background:#bdbdbd;"></div>
<div style="position:absolute;left:18.30px;top:293.20px;width:991.40px;height:1.00px;background:#d9d9d9;"></div>
<div style="position:absolute;left:0.00px;top:293.10px;width:18.30px;height:1.20px;background:#bdbdbd;"></div>
<div style="position:absolute;left:18.30px;top:309.70px;width:991.40px;height:1.00px;background:#d9d9d9;"></div>
<div style="position:absolute;left:0.00px;top:309.60px;width:18.30px;height:1.20px;background:#bdbdbd;"></div>
<div style="position:absolute;left:18.30px;top:326.00px;width:991.40px;height:1.00px;background:#d9d9d9;"></div>
<div style="position:absolute;left:0.00px;top:325.90px;width:18.30px;height:1.20px;background:#bdbdbd;"></div>
<div style="position:absolute;left:18.30px;top:337.50px;width:991.40px;height:1.00px;background:#d9d9d9;"></div>
<div style="position:absolute;left:0.00px;top:337.40px;width:18.30px;height:1.20px;background:#bdbdbd;"></div>
<div style="position:absolute;left:18.30px;top:377.80px;width:991.40px;height:1.00px;background:#d9d9d9;"></div>
<div style="position:absolute;left:0.00px;top:377.70px;width:18.30px;height:1.20px;background:#bdbdbd;"></div>
<div style="position:absolute;left:18.30px;top:394.00px;width:991.40px;height:1.00px;background:#d9d9d9;"></div>
<div style="position:absolute;left:0.00px;top:393.90px;width:18.30px;height:1.20px;background:#bdbdbd;"></div>
<div style="position:absolute;left:18.30px;top:410.00px;width:991.40px;height:1.00px;background:#d9d9d9;"></div>
<div style="position:absolute;left:0.00px;top:409.90px;width:18.30px;height:1.20px;background:#bdbdbd;"></div>
<div style="position:absolute;left:18.30px;top:426.00px;width:991.40px;height:1.00px;background:#d9d9d9;"></div>
<div style="position:absolute;left:0.00px;top:425.90px;width:18.30px;height:1.20px;background:#bdbdbd;"></div>
<div style="position:absolute;left:18.30px;top:441.50px;width:991.40px;height:1.00px;background:#d9d9d9;"></div>
<div style="position:absolute;left:0.00px;top:441.40px;width:18.30px;height:1.20px;background:#bdbdbd;"></div>
<div style="position:absolute;left:18.30px;top:457.50px;width:991.40px;height:1.00px;background:#d9d9d9;"></div>
<div style="position:absolute;left:0.00px;top:457.40px;width:18.30px;height:1.20px;background:#bdbdbd;"></div>
<div style="position:absolute;left:18.30px;top:473.50px;width:991.40px;height:1.00px;background:#d9d9d9;"></div>
<div style="position:absolute;left:0.00px;top:473.40px;width:18.30px;height:1.20px;background:#bdbdbd;"></div>
<div style="position:absolute;left:18.30px;top:489.20px;width:991.40px;height:1.00px;background:#d9d9d9;"></div>
<div style="position:absolute;left:0.00px;top:489.10px;width:18.30px;height:1.20px;background:#bdbdbd;"></div>
<div style="position:absolute;left:18.30px;top:505.00px;width:991.40px;height:1.00px;background:#d9d9d9;"></div>
<div style="position:absolute;left:0.00px;top:504.90px;width:18.30px;height:1.20px;background:#bdbdbd;"></div>
<div style="position:absolute;left:18.30px;top:521.00px;width:991.40px;height:1.00px;background:#d9d9d9;"></div>
<div style="position:absolute;left:0.00px;top:520.90px;width:18.30px;height:1.20px;background:#bdbdbd;"></div>
<div style="position:absolute;left:18.30px;top:536.50px;width:991.40px;height:1.00px;background:#d9d9d9;"></div>
<div style="position:absolute;left:0.00px;top:536.40px;width:18.30px;height:1.20px;background:#bdbdbd;"></div>
<div style="position:absolute;left:139.75px;top:177.60px;width:1.00px;height:359.40px;background:#d9d9d9;"></div>
<div style="position:absolute;left:306.10px;top:177.60px;width:1.00px;height:359.40px;background:#d9d9d9;"></div>
<div style="position:absolute;left:384.75px;top:177.60px;width:1.00px;height:359.40px;background:#d9d9d9;"></div>
<div style="position:absolute;left:482.00px;top:177.60px;width:1.00px;height:359.40px;background:#d9d9d9;"></div>
<div style="position:absolute;left:545.50px;top:177.60px;width:1.00px;height:359.40px;background:#d9d9d9;"></div>
<div style="position:absolute;left:629.60px;top:177.60px;width:1.00px;height:359.40px;background:#d9d9d9;"></div>
<div style="position:absolute;left:722.00px;top:177.60px;width:1.00px;height:359.40px;background:#d9d9d9;"></div>
<div style="position:absolute;left:786.00px;top:177.60px;width:1.00px;height:359.40px;background:#d9d9d9;"></div>
<div style="position:absolute;left:846.00px;top:177.60px;width:1.00px;height:359.40px;background:#d9d9d9;"></div>
<div style="position:absolute;left:906.10px;top:177.60px;width:1.00px;height:359.40px;background:#d9d9d9;"></div>
<div style="position:absolute;left:966.10px;top:177.60px;width:1.00px;height:359.40px;background:#d9d9d9;"></div>
<div style="position:absolute;left:1009.20px;top:177.60px;width:1.00px;height:359.40px;background:#d9d9d9;"></div>
<div style="position:absolute;left:18.30px;top:255.50px;width:991.40px;height:1.40px;background:#cdcdcd;"></div>
<div style="position:absolute;left:17.80px;top:161.75px;width:1.00px;height:375.25px;background:#c0c0c0;"></div>
<div style="position:absolute;left:0.00px;top:378.80px;width:17.30px;height:15.20px;background:#d2d2d2;"></div>
<div style="position:absolute;left:16.90px;top:378.30px;width:2.00px;height:16.20px;background:#217346;"></div>
<div id="t64" style="position:absolute;left:6.70px;top:240.37px;font-size:10.2px;line-height:10.2px;font-family:'Liberation Sans', sans-serif;font-weight:400;color:#444;white-space:nowrap;transform:scaleX(0.9521);transform-origin:0 0;-webkit-text-stroke:0.18px #444;-webkit-text-stroke:0.25px #444;">1</div>
<div id="t65" style="position:absolute;left:6.70px;top:265.27px;font-size:10.2px;line-height:10.2px;font-family:'Liberation Sans', sans-serif;font-weight:400;color:#444;white-space:nowrap;transform:scaleX(0.9521);transform-origin:0 0;-webkit-text-stroke:0.18px #444;-webkit-text-stroke:0.25px #444;">2</div>
<div id="t66" style="position:absolute;left:6.70px;top:281.47px;font-size:10.2px;line-height:10.2px;font-family:'Liberation Sans', sans-serif;font-weight:400;color:#444;white-space:nowrap;transform:scaleX(0.9521);transform-origin:0 0;-webkit-text-stroke:0.18px #444;-webkit-text-stroke:0.25px #444;">3</div>
<div id="t67" style="position:absolute;left:6.70px;top:297.97px;font-size:10.2px;line-height:10.2px;font-family:'Liberation Sans', sans-serif;font-weight:400;color:#444;white-space:nowrap;transform:scaleX(0.9521);transform-origin:0 0;-webkit-text-stroke:0.18px #444;-webkit-text-stroke:0.25px #444;">4</div>
<div id="t68" style="position:absolute;left:6.70px;top:314.27px;font-size:10.2px;line-height:10.2px;font-family:'Liberation Sans', sans-serif;font-weight:400;color:#444;white-space:nowrap;transform:scaleX(0.9521);transform-origin:0 0;-webkit-text-stroke:0.18px #444;-webkit-text-stroke:0.25px #444;">5</div>
<div id="t69" style="position:absolute;left:6.70px;top:325.77px;font-size:10.2px;line-height:10.2px;font-family:'Liberation Sans', sans-serif;font-weight:400;color:#444;white-space:nowrap;transform:scaleX(0.9521);transform-origin:0 0;-webkit-text-stroke:0.18px #444;-webkit-text-stroke:0.25px #444;">6</div>
<div id="t70" style="position:absolute;left:6.70px;top:366.07px;font-size:10.2px;line-height:10.2px;font-family:'Liberation Sans', sans-serif;font-weight:400;color:#444;white-space:nowrap;transform:scaleX(0.9521);transform-origin:0 0;-webkit-text-stroke:0.18px #444;-webkit-text-stroke:0.25px #444;">7</div>
<div id="t71" style="position:absolute;left:6.70px;top:382.27px;font-size:10.2px;line-height:10.2px;font-family:'Liberation Sans', sans-serif;font-weight:400;color:#217346;white-space:nowrap;transform:scaleX(0.9521);transform-origin:0 0;-webkit-text-stroke:0.18px #217346;-webkit-text-stroke:0.25px #217346;">8</div>
<div id="t72" style="position:absolute;left:6.70px;top:398.27px;font-size:10.2px;line-height:10.2px;font-family:'Liberation Sans', sans-serif;font-weight:400;color:#444;white-space:nowrap;transform:scaleX(0.9521);transform-origin:0 0;-webkit-text-stroke:0.18px #444;-webkit-text-stroke:0.25px #444;">9</div>
<div id="t73" style="position:absolute;left:3.70px;top:414.27px;font-size:10.2px;line-height:10.2px;font-family:'Liberation Sans', sans-serif;font-weight:400;color:#444;white-space:nowrap;transform:scaleX(1.0050);transform-origin:0 0;-webkit-text-stroke:0.18px #444;-webkit-text-stroke:0.25px #444;">10</div>
<div id="t74" style="position:absolute;left:3.70px;top:429.77px;font-size:10.2px;line-height:10.2px;font-family:'Liberation Sans', sans-serif;font-weight:400;color:#444;white-space:nowrap;transform:scaleX(1.0777);transform-origin:0 0;-webkit-text-stroke:0.18px #444;-webkit-text-stroke:0.25px #444;">11</div>
<div id="t75" style="position:absolute;left:3.70px;top:445.77px;font-size:10.2px;line-height:10.2px;font-family:'Liberation Sans', sans-serif;font-weight:400;color:#444;white-space:nowrap;transform:scaleX(1.0050);transform-origin:0 0;-webkit-text-stroke:0.18px #444;-webkit-text-stroke:0.25px #444;">12</div>
<div id="t76" style="position:absolute;left:3.70px;top:461.77px;font-size:10.2px;line-height:10.2px;font-family:'Liberation Sans', sans-serif;font-weight:400;color:#444;white-space:nowrap;transform:scaleX(1.0050);transform-origin:0 0;-webkit-text-stroke:0.18px #444;-webkit-text-stroke:0.25px #444;">13</div>
<div id="t77" style="position:absolute;left:3.70px;top:477.47px;font-size:10.2px;line-height:10.2px;font-family:'Liberation Sans', sans-serif;font-weight:400;color:#444;white-space:nowrap;transform:scaleX(1.0050);transform-origin:0 0;-webkit-text-stroke:0.18px #444;-webkit-text-stroke:0.25px #444;">14</div>
<div id="t78" style="position:absolute;left:3.70px;top:493.27px;font-size:10.2px;line-height:10.2px;font-family:'Liberation Sans', sans-serif;font-weight:400;color:#444;white-space:nowrap;transform:scaleX(1.0050);transform-origin:0 0;-webkit-text-stroke:0.18px #444;-webkit-text-stroke:0.25px #444;">15</div>
<div id="t79" style="position:absolute;left:3.70px;top:509.27px;font-size:10.2px;line-height:10.2px;font-family:'Liberation Sans', sans-serif;font-weight:400;color:#444;white-space:nowrap;transform:scaleX(1.0050);transform-origin:0 0;-webkit-text-stroke:0.18px #444;-webkit-text-stroke:0.25px #444;">16</div>
<div id="t80" style="position:absolute;left:3.70px;top:524.77px;font-size:10.2px;line-height:10.2px;font-family:'Liberation Sans', sans-serif;font-weight:400;color:#444;white-space:nowrap;transform:scaleX(1.0050);transform-origin:0 0;-webkit-text-stroke:0.18px #444;-webkit-text-stroke:0.25px #444;">17</div>
<svg style="position:absolute;left:7.00px;top:165.50px;" width="9" height="9" viewBox="0 0 9 9"><path d="M9 0 L9 9 L0 9 Z" fill="#b4b4b4"/></svg>
<div style="position:absolute;left:0.00px;top:537.00px;width:1024.00px;height:22.50px;background:#e6e6e6;"></div>
<div style="position:absolute;left:0.00px;top:536.20px;width:1010.00px;height:1.80px;background:#c4c4c4;"></div>
<div style="position:absolute;left:118.00px;top:537.00px;width:58.50px;height:19.30px;background:#ffffff;"></div>
<div style="position:absolute;left:118.00px;top:555.50px;width:58.50px;height:1.50px;background:#217346;"></div>
<div style="position:absolute;left:0.00px;top:559.50px;width:1024.00px;height:16.50px;background:#f0f0f0;"></div>
<div id="t81" style="position:absolute;left:127.50px;top:543.36px;font-size:10.5px;line-height:10.5px;font-family:'Liberation Sans', sans-serif;font-weight:700;color:#217346;white-space:nowrap;transform:scaleX(0.9022);transform-origin:0 0;">Almacén</div>
<div id="t82" style="position:absolute;left:85.00px;top:543.36px;font-size:10.5px;line-height:10.5px;font-family:'Liberation Sans', sans-serif;font-weight:400;color:#444;white-space:nowrap;transform:scaleX(0.8974);transform-origin:0 0;-webkit-text-stroke:0.18px #444;">Inicio</div>
<div id="t83" style="position:absolute;left:185.50px;top:543.36px;font-size:10.5px;line-height:10.5px;font-family:'Liberation Sans', sans-serif;font-weight:400;color:#444;white-space:nowrap;transform:scaleX(0.9328);transform-origin:0 0;-webkit-text-stroke:0.18px #444;">Empleados</div>
<div id="t84" style="position:absolute;left:255.00px;top:543.36px;font-size:10.5px;line-height:10.5px;font-family:'Liberation Sans', sans-serif;font-weight:400;color:#444;white-space:nowrap;transform:scaleX(0.9217);transform-origin:0 0;-webkit-text-stroke:0.18px #444;">Compras y ventas</div>
<div id="t85" style="position:absolute;left:354.00px;top:543.36px;font-size:10.5px;line-height:10.5px;font-family:'Liberation Sans', sans-serif;font-weight:400;color:#444;white-space:nowrap;transform:scaleX(0.9457);transform-origin:0 0;-webkit-text-stroke:0.18px #444;">Catálogo</div>
<div id="t86" style="position:absolute;left:412.80px;top:543.36px;font-size:10.5px;line-height:10.5px;font-family:'Liberation Sans', sans-serif;font-weight:400;color:#444;white-space:nowrap;transform:scaleX(0.8928);transform-origin:0 0;-webkit-text-stroke:0.18px #444;">Gastos</div>
<div id="t87" style="position:absolute;left:462.50px;top:543.36px;font-size:10.5px;line-height:10.5px;font-family:'Liberation Sans', sans-serif;font-weight:400;color:#444;white-space:nowrap;transform:scaleX(0.8776);transform-origin:0 0;-webkit-text-stroke:0.18px #444;">Factura</div>
<svg style="position:absolute;left:18.00px;top:544.00px;" width="6" height="9" viewBox="0 0 6 9"><path d="M4.5 1 L1.5 4.5 L4.5 8" fill="none" stroke="#b0b0b0" stroke-width="1"/></svg>
<svg style="position:absolute;left:40.00px;top:544.00px;" width="6" height="9" viewBox="0 0 6 9"><path d="M1.5 1 L4.5 4.5 L1.5 8" fill="none" stroke="#b0b0b0" stroke-width="1"/></svg>
<div style="position:absolute;left:74.50px;top:541.00px;width:1.00px;height:14.00px;background:#b0b0b0;"></div>
<div style="position:absolute;left:244.00px;top:541.00px;width:1.00px;height:14.00px;background:#b0b0b0;"></div>
<div style="position:absolute;left:344.20px;top:541.00px;width:1.00px;height:14.00px;background:#b0b0b0;"></div>
<div style="position:absolute;left:403.50px;top:541.00px;width:1.00px;height:14.00px;background:#b0b0b0;"></div>
<div style="position:absolute;left:452.50px;top:541.00px;width:1.00px;height:14.00px;background:#b0b0b0;"></div>
<div style="position:absolute;left:503.50px;top:541.00px;width:1.00px;height:14.00px;background:#b0b0b0;"></div>
<div id="t88" style="position:absolute;left:5.00px;top:564.21px;font-size:9.5px;line-height:9.5px;font-family:'Liberation Sans', sans-serif;font-weight:400;color:#444;white-space:nowrap;transform:scaleX(0.9134);transform-origin:0 0;-webkit-text-stroke:0.18px #444;">Arrastre hacia fuera para extender o rellenar o hacia dentro para borrar</div>
<div id="t89" style="position:absolute;left:23.00px;top:226.70px;font-size:25.4px;line-height:25.4px;font-family:'Liberation Sans', sans-serif;font-weight:400;color:#1a1a1a;white-space:nowrap;transform:scaleX(0.9241);transform-origin:0 0;-webkit-text-stroke:0.18px #1a1a1a;-webkit-text-stroke:0.35px #1a1a1a;">Almacén</div>
<div style="position:absolute;left:139.80px;top:276.80px;width:646.50px;height:49.50px;background:#ffffff;"></div>
<div style="position:absolute;left:139.80px;top:275.80px;width:646.50px;height:2.00px;background:#1a1a1a;"></div>
<div style="position:absolute;left:139.80px;top:292.60px;width:646.50px;height:2.00px;background:#1a1a1a;"></div>
<div style="position:absolute;left:139.80px;top:309.00px;width:406.00px;height:2.00px;background:#1a1a1a;"></div>
<div style="position:absolute;left:139.80px;top:325.30px;width:646.50px;height:2.00px;background:#1a1a1a;"></div>
<div style="position:absolute;left:138.80px;top:275.80px;width:2.00px;height:51.50px;background:#1a1a1a;"></div>
<div style="position:absolute;left:304.80px;top:275.80px;width:2.00px;height:51.50px;background:#1a1a1a;"></div>
<div style="position:absolute;left:544.80px;top:275.80px;width:2.00px;height:51.50px;background:#1a1a1a;"></div>
<div style="position:absolute;left:629.20px;top:275.80px;width:2.00px;height:51.50px;background:#1a1a1a;"></div>
<div style="position:absolute;left:785.30px;top:275.80px;width:2.00px;height:51.50px;background:#1a1a1a;"></div>
<div id="t90" style="position:absolute;left:142.70px;top:280.63px;font-size:10.6px;line-height:10.6px;font-family:'Liberation Sans', sans-serif;font-weight:700;color:#1e1e1e;white-space:nowrap;transform:scaleX(0.9077);transform-origin:0 0;">Total precio de compra</div>
<div id="t91" style="position:absolute;left:142.70px;top:297.13px;font-size:10.6px;line-height:10.6px;font-family:'Liberation Sans', sans-serif;font-weight:700;color:#1e1e1e;white-space:nowrap;transform:scaleX(0.9211);transform-origin:0 0;">Valor total estimado artículos</div>
<div id="t92" style="position:absolute;left:142.70px;top:313.43px;font-size:10.6px;line-height:10.6px;font-family:'Liberation Sans', sans-serif;font-weight:700;color:#1e1e1e;white-space:nowrap;transform:scaleX(0.9100);transform-origin:0 0;">Diferencia actual precio de compra</div>
<div id="t93" style="position:absolute;left:413.60px;top:280.63px;font-size:10.6px;line-height:10.6px;font-family:'Liberation Sans', sans-serif;font-weight:700;color:#1e1e1e;white-space:nowrap;transform:scaleX(0.8891);transform-origin:0 0;">13104</div>
<div id="t94" style="position:absolute;left:413.60px;top:313.43px;font-size:10.6px;line-height:10.6px;font-family:'Liberation Sans', sans-serif;font-weight:700;color:#1e1e1e;white-space:nowrap;transform:scaleX(0.8891);transform-origin:0 0;">13104</div>
<div id="t95" style="position:absolute;left:569.50px;top:280.63px;font-size:10.6px;line-height:10.6px;font-family:'Liberation Sans', sans-serif;font-weight:700;color:#1e1e1e;white-space:nowrap;transform:scaleX(0.8728);transform-origin:0 0;">Recargo</div>
<div id="t96" style="position:absolute;left:651.30px;top:280.63px;font-size:10.6px;line-height:10.6px;font-family:'Liberation Sans', sans-serif;font-weight:700;color:#1e1e1e;white-space:nowrap;transform:scaleX(0.9202);transform-origin:0 0;">Total artículos inventario</div>
<div id="t97" style="position:absolute;left:581.40px;top:313.43px;font-size:10.6px;line-height:10.6px;font-family:'Liberation Sans', sans-serif;font-weight:700;color:#1e1e1e;white-space:nowrap;transform:scaleX(0.9298);transform-origin:0 0;">0.3</div>
<div style="position:absolute;left:139.50px;top:337.50px;width:647.20px;height:41.30px;background:#4472c4;"></div>
<div id="t98" style="position:absolute;left:180.00px;top:354.37px;font-size:9.6px;line-height:9.6px;font-family:'Liberation Sans', sans-serif;font-weight:700;color:#f4f7fc;white-space:nowrap;transform:scaleX(0.8835);transform-origin:0 0;">Artículo / Descripción</div>
<div id="t99" style="position:absolute;left:313.80px;top:354.37px;font-size:9.6px;line-height:9.6px;font-family:'Liberation Sans', sans-serif;font-weight:700;color:#f4f7fc;white-space:nowrap;transform:scaleX(0.9349);transform-origin:0 0;">Marca / Modelo</div>
<div id="t100" style="position:absolute;left:399.80px;top:347.17px;font-size:9.6px;line-height:9.6px;font-family:'Liberation Sans', sans-serif;font-weight:700;color:#f4f7fc;white-space:nowrap;transform:scaleX(0.8336);transform-origin:0 0;">N° identificación /</div>
<div id="t101" style="position:absolute;left:387.90px;top:360.37px;font-size:9.6px;line-height:9.6px;font-family:'Liberation Sans', sans-serif;font-weight:700;color:#f4f7fc;white-space:nowrap;transform:scaleX(0.8205);transform-origin:0 0;">Serie/Código/Referencia</div>
<div id="t102" style="position:absolute;left:496.00px;top:347.17px;font-size:9.6px;line-height:9.6px;font-family:'Liberation Sans', sans-serif;font-weight:700;color:#f4f7fc;white-space:nowrap;transform:scaleX(0.8751);transform-origin:0 0;">Fecha de</div>
<div id="t103" style="position:absolute;left:498.60px;top:360.37px;font-size:9.6px;line-height:9.6px;font-family:'Liberation Sans', sans-serif;font-weight:700;color:#f4f7fc;white-space:nowrap;transform:scaleX(0.8974);transform-origin:0 0;">compra</div>
<div id="t104" style="position:absolute;left:554.00px;top:354.37px;font-size:9.6px;line-height:9.6px;font-family:'Liberation Sans', sans-serif;font-weight:700;color:#f4f7fc;white-space:nowrap;transform:scaleX(0.8735);transform-origin:0 0;">Lugar de compra</div>
<div id="t105" style="position:absolute;left:640.00px;top:354.37px;font-size:9.6px;line-height:9.6px;font-family:'Liberation Sans', sans-serif;font-weight:700;color:#f4f7fc;white-space:nowrap;transform:scaleX(0.8942);transform-origin:0 0;">Precio de compra</div>
<div id="t106" style="position:absolute;left:735.00px;top:347.17px;font-size:9.6px;line-height:9.6px;font-family:'Liberation Sans', sans-serif;font-weight:700;color:#f4f7fc;white-space:nowrap;transform:scaleX(0.8842);transform-origin:0 0;">Precio de</div>
<div id="t107" style="position:absolute;left:742.40px;top:360.37px;font-size:9.6px;line-height:9.6px;font-family:'Liberation Sans', sans-serif;font-weight:700;color:#f4f7fc;white-space:nowrap;transform:scaleX(0.9416);transform-origin:0 0;">venta</div>
<div style="position:absolute;left:141.9px;top:381.91px;font-size:11.8px;line-height:11.8px;color:#262626;-webkit-text-stroke:0.2px #262626;white-space:nowrap;transform:scaleX(0.875);transform-origin:0 0">Calzado deportivo</div>
<div style="position:absolute;left:308.75px;top:381.91px;font-size:11.8px;line-height:11.8px;color:#262626;-webkit-text-stroke:0.2px #262626;white-space:nowrap;transform:scaleX(0.875);transform-origin:0 0">Modelo 1</div>
<div style="position:absolute;left:387.4px;top:381.91px;font-size:11.8px;line-height:11.8px;color:#262626;-webkit-text-stroke:0.2px #262626;white-space:nowrap;transform:scaleX(0.875);transform-origin:0 0">CalM1P1</div>
<div style="position:absolute;right:479.50px;top:381.91px;font-size:11.8px;line-height:11.8px;color:#262626;-webkit-text-stroke:0.2px #262626;white-space:nowrap;transform:scaleX(0.875);transform-origin:100% 0">26/10/2017</div>
<div style="position:absolute;left:548px;top:381.91px;font-size:11.8px;line-height:11.8px;color:#262626;-webkit-text-stroke:0.2px #262626;white-space:nowrap;transform:scaleX(0.875);transform-origin:0 0">Proveedor 1</div>
<div style="position:absolute;right:303.00px;top:381.91px;font-size:11.8px;line-height:11.8px;color:#262626;-webkit-text-stroke:0.2px #262626;white-space:nowrap;transform:scaleX(0.875);transform-origin:100% 0">2422</div>
<div style="position:absolute;right:239.20px;top:381.91px;font-size:11.8px;line-height:11.8px;color:#262626;-webkit-text-stroke:0.2px #262626;white-space:nowrap;transform:scaleX(0.875);transform-origin:100% 0">3148.6</div>
<div style="position:absolute;left:141.9px;top:397.91px;font-size:11.8px;line-height:11.8px;color:#262626;-webkit-text-stroke:0.2px #262626;white-space:nowrap;transform:scaleX(0.875);transform-origin:0 0">Playera</div>
<div style="position:absolute;left:308.75px;top:397.91px;font-size:11.8px;line-height:11.8px;color:#262626;-webkit-text-stroke:0.2px #262626;white-space:nowrap;transform:scaleX(0.875);transform-origin:0 0">Modelo 2</div>
<div style="position:absolute;right:479.50px;top:397.91px;font-size:11.8px;line-height:11.8px;color:#262626;-webkit-text-stroke:0.2px #262626;white-space:nowrap;transform:scaleX(0.875);transform-origin:100% 0">26/10/2017</div>
<div style="position:absolute;left:548px;top:397.91px;font-size:11.8px;line-height:11.8px;color:#262626;-webkit-text-stroke:0.2px #262626;white-space:nowrap;transform:scaleX(0.875);transform-origin:0 0">Proveedor 2</div>
<div style="position:absolute;right:303.00px;top:397.91px;font-size:11.8px;line-height:11.8px;color:#262626;-webkit-text-stroke:0.2px #262626;white-space:nowrap;transform:scaleX(0.875);transform-origin:100% 0">1822</div>
<div style="position:absolute;right:239.20px;top:397.91px;font-size:11.8px;line-height:11.8px;color:#262626;-webkit-text-stroke:0.2px #262626;white-space:nowrap;transform:scaleX(0.875);transform-origin:100% 0">2368.6</div>
<div style="position:absolute;left:141.9px;top:413.91px;font-size:11.8px;line-height:11.8px;color:#262626;-webkit-text-stroke:0.2px #262626;white-space:nowrap;transform:scaleX(0.875);transform-origin:0 0">Saco dama</div>
<div style="position:absolute;left:308.75px;top:413.91px;font-size:11.8px;line-height:11.8px;color:#262626;-webkit-text-stroke:0.2px #262626;white-space:nowrap;transform:scaleX(0.875);transform-origin:0 0">Modelo 3</div>
<div style="position:absolute;right:479.50px;top:413.91px;font-size:11.8px;line-height:11.8px;color:#262626;-webkit-text-stroke:0.2px #262626;white-space:nowrap;transform:scaleX(0.875);transform-origin:100% 0">26/10/2017</div>
<div style="position:absolute;left:548px;top:413.91px;font-size:11.8px;line-height:11.8px;color:#262626;-webkit-text-stroke:0.2px #262626;white-space:nowrap;transform:scaleX(0.875);transform-origin:0 0">Proveedor 3</div>
<div style="position:absolute;right:303.00px;top:413.91px;font-size:11.8px;line-height:11.8px;color:#262626;-webkit-text-stroke:0.2px #262626;white-space:nowrap;transform:scaleX(0.875);transform-origin:100% 0">1290</div>
<div style="position:absolute;right:239.20px;top:413.91px;font-size:11.8px;line-height:11.8px;color:#262626;-webkit-text-stroke:0.2px #262626;white-space:nowrap;transform:scaleX(0.875);transform-origin:100% 0">1677</div>
<div style="position:absolute;left:141.9px;top:429.41px;font-size:11.8px;line-height:11.8px;color:#262626;-webkit-text-stroke:0.2px #262626;white-space:nowrap;transform:scaleX(0.875);transform-origin:0 0">Camisa</div>
<div style="position:absolute;left:308.75px;top:429.41px;font-size:11.8px;line-height:11.8px;color:#262626;-webkit-text-stroke:0.2px #262626;white-space:nowrap;transform:scaleX(0.875);transform-origin:0 0">Modelo 4</div>
<div style="position:absolute;right:479.50px;top:429.41px;font-size:11.8px;line-height:11.8px;color:#262626;-webkit-text-stroke:0.2px #262626;white-space:nowrap;transform:scaleX(0.875);transform-origin:100% 0">26/10/2017</div>
<div style="position:absolute;left:548px;top:429.41px;font-size:11.8px;line-height:11.8px;color:#262626;-webkit-text-stroke:0.2px #262626;white-space:nowrap;transform:scaleX(0.875);transform-origin:0 0">Proveedor 4</div>
<div style="position:absolute;right:303.00px;top:429.41px;font-size:11.8px;line-height:11.8px;color:#262626;-webkit-text-stroke:0.2px #262626;white-space:nowrap;transform:scaleX(0.875);transform-origin:100% 0">1407</div>
<div style="position:absolute;right:239.20px;top:429.41px;font-size:11.8px;line-height:11.8px;color:#262626;-webkit-text-stroke:0.2px #262626;white-space:nowrap;transform:scaleX(0.875);transform-origin:100% 0">1829.1</div>
<div style="position:absolute;left:141.9px;top:445.41px;font-size:11.8px;line-height:11.8px;color:#262626;-webkit-text-stroke:0.2px #262626;white-space:nowrap;transform:scaleX(0.875);transform-origin:0 0">Corbata</div>
<div style="position:absolute;left:308.75px;top:445.41px;font-size:11.8px;line-height:11.8px;color:#262626;-webkit-text-stroke:0.2px #262626;white-space:nowrap;transform:scaleX(0.875);transform-origin:0 0">Modelo 5</div>
<div style="position:absolute;right:479.50px;top:445.41px;font-size:11.8px;line-height:11.8px;color:#262626;-webkit-text-stroke:0.2px #262626;white-space:nowrap;transform:scaleX(0.875);transform-origin:100% 0">26/10/2017</div>
<div style="position:absolute;left:548px;top:445.41px;font-size:11.8px;line-height:11.8px;color:#262626;-webkit-text-stroke:0.2px #262626;white-space:nowrap;transform:scaleX(0.875);transform-origin:0 0">Proveedor 5</div>
<div style="position:absolute;right:303.00px;top:445.41px;font-size:11.8px;line-height:11.8px;color:#262626;-webkit-text-stroke:0.2px #262626;white-space:nowrap;transform:scaleX(0.875);transform-origin:100% 0">2484</div>
<div style="position:absolute;right:239.20px;top:445.41px;font-size:11.8px;line-height:11.8px;color:#262626;-webkit-text-stroke:0.2px #262626;white-space:nowrap;transform:scaleX(0.875);transform-origin:100% 0">3229.2</div>
<div style="position:absolute;left:141.9px;top:461.41px;font-size:11.8px;line-height:11.8px;color:#262626;-webkit-text-stroke:0.2px #262626;white-space:nowrap;transform:scaleX(0.875);transform-origin:0 0">Lentes de sol</div>
<div style="position:absolute;left:308.75px;top:461.41px;font-size:11.8px;line-height:11.8px;color:#262626;-webkit-text-stroke:0.2px #262626;white-space:nowrap;transform:scaleX(0.875);transform-origin:0 0">Modelo 6</div>
<div style="position:absolute;right:479.50px;top:461.41px;font-size:11.8px;line-height:11.8px;color:#262626;-webkit-text-stroke:0.2px #262626;white-space:nowrap;transform:scaleX(0.875);transform-origin:100% 0">26/10/2017</div>
<div style="position:absolute;left:548px;top:461.41px;font-size:11.8px;line-height:11.8px;color:#262626;-webkit-text-stroke:0.2px #262626;white-space:nowrap;transform:scaleX(0.875);transform-origin:0 0">Proveedor 6</div>
<div style="position:absolute;right:303.00px;top:461.41px;font-size:11.8px;line-height:11.8px;color:#262626;-webkit-text-stroke:0.2px #262626;white-space:nowrap;transform:scaleX(0.875);transform-origin:100% 0">1812</div>
<div style="position:absolute;right:239.20px;top:461.41px;font-size:11.8px;line-height:11.8px;color:#262626;-webkit-text-stroke:0.2px #262626;white-space:nowrap;transform:scaleX(0.875);transform-origin:100% 0">2355.6</div>
<div style="position:absolute;left:141.9px;top:477.11px;font-size:11.8px;line-height:11.8px;color:#262626;-webkit-text-stroke:0.2px #262626;white-space:nowrap;transform:scaleX(0.875);transform-origin:0 0">Pantalón</div>
<div style="position:absolute;left:308.75px;top:477.11px;font-size:11.8px;line-height:11.8px;color:#262626;-webkit-text-stroke:0.2px #262626;white-space:nowrap;transform:scaleX(0.875);transform-origin:0 0">Modelo 7</div>
<div style="position:absolute;right:479.50px;top:477.11px;font-size:11.8px;line-height:11.8px;color:#262626;-webkit-text-stroke:0.2px #262626;white-space:nowrap;transform:scaleX(0.875);transform-origin:100% 0">26/10/2017</div>
<div style="position:absolute;left:548px;top:477.11px;font-size:11.8px;line-height:11.8px;color:#262626;-webkit-text-stroke:0.2px #262626;white-space:nowrap;transform:scaleX(0.875);transform-origin:0 0">Proveedor 7</div>
<div style="position:absolute;right:303.00px;top:477.11px;font-size:11.8px;line-height:11.8px;color:#262626;-webkit-text-stroke:0.2px #262626;white-space:nowrap;transform:scaleX(0.875);transform-origin:100% 0">836</div>
<div style="position:absolute;right:239.20px;top:477.11px;font-size:11.8px;line-height:11.8px;color:#262626;-webkit-text-stroke:0.2px #262626;white-space:nowrap;transform:scaleX(0.875);transform-origin:100% 0">1086.8</div>
<div style="position:absolute;left:141.9px;top:492.91px;font-size:11.8px;line-height:11.8px;color:#262626;-webkit-text-stroke:0.2px #262626;white-space:nowrap;transform:scaleX(0.875);transform-origin:0 0">Bolso dama</div>
<div style="position:absolute;left:308.75px;top:492.91px;font-size:11.8px;line-height:11.8px;color:#262626;-webkit-text-stroke:0.2px #262626;white-space:nowrap;transform:scaleX(0.875);transform-origin:0 0">Modelo 8</div>
<div style="position:absolute;right:479.50px;top:492.91px;font-size:11.8px;line-height:11.8px;color:#262626;-webkit-text-stroke:0.2px #262626;white-space:nowrap;transform:scaleX(0.875);transform-origin:100% 0">26/10/2017</div>
<div style="position:absolute;left:548px;top:492.91px;font-size:11.8px;line-height:11.8px;color:#262626;-webkit-text-stroke:0.2px #262626;white-space:nowrap;transform:scaleX(0.875);transform-origin:0 0">Proveedor 8</div>
<div style="position:absolute;right:303.00px;top:492.91px;font-size:11.8px;line-height:11.8px;color:#262626;-webkit-text-stroke:0.2px #262626;white-space:nowrap;transform:scaleX(0.875);transform-origin:100% 0">1031</div>
<div style="position:absolute;right:239.20px;top:492.91px;font-size:11.8px;line-height:11.8px;color:#262626;-webkit-text-stroke:0.2px #262626;white-space:nowrap;transform:scaleX(0.875);transform-origin:100% 0">1340.3</div>
<svg style="position:absolute;left:138.00px;top:176.00px;" width="70" height="70" viewBox="0 0 70 70">
<defs><linearGradient id="hb" x1="0" y1="0" x2="0" y2="1"><stop offset="0" stop-color="#19a6ff"/><stop offset="1" stop-color="#0b86f0"/></linearGradient></defs>
<rect x="47.8" y="7.7" width="7.8" height="15" fill="#404040"/>
<path d="M7 29 L34.5 5.5 L62 29" fill="none" stroke="#404040" stroke-width="5" stroke-linecap="round" stroke-linejoin="round"/>
<path d="M34 15 L59.9 34.4 L59.9 64.2 Q59.9 66.2 57.9 66.2 L45 66.2 Q43 66.2 43 64.2 L43 45.1 Q43 42.1 40 42.1 L28.5 42.1 Q25.5 42.1 25.5 45.1 L25.5 64.2 Q25.5 66.2 23.5 66.2 L11.2 66.2 Q9.2 66.2 9.2 64.2 L9.2 34.4 Z" fill="url(#hb)" stroke="#33475a" stroke-width="1.3" stroke-linejoin="round"/>
</svg>
<svg style="position:absolute;left:236.00px;top:176.00px;" width="72" height="68" viewBox="0 0 72 68">
<defs><filter id="bsh"><feGaussianBlur stdDeviation="1.2"/></filter></defs>
<path d="M5 56 L43 62 L68 53 L68 50 L43 58 L5 52 Z" fill="#999" opacity="0.35" filter="url(#bsh)"/>
<path d="M36 47 L66 47.5 L66 52 L42.5 55 L36 54 Z" fill="#dcc698"/>
<path d="M6.5 48 L42.5 53 L42.5 60.2 L6.5 54.5 Z" fill="#cdb27c"/>
<path d="M9 50.8 L21 52.5 L21 55.5 L9 53.8 Z" fill="#7a6440"/>
<path d="M25 53 L40 55.2 L40 58.3 L25 56 Z" fill="#7a6440"/>
<path d="M42.5 53 L66 49.5 L66 53 L42.5 60.2 Z" fill="#b39462"/>
<path d="M47 54.5 L64 51.8 L64 53.6 L47 56.8 Z" fill="#7a6440"/>
<path d="M36.6 29 L65.5 31 L65.5 48.4 L36.6 47 Z" fill="#d6532f"/>
<path d="M36.6 10 L66 12.5 L66 31 L36.6 29 Z" fill="#dc5832"/>
<path d="M36.6 10 L40 7 L67.5 9 L66 12.5 Z" fill="#ee7a52"/>
<path d="M17.7 8.5 L36.6 10 L36.6 28.5 L17.7 27 Z" fill="#e25e38"/>
<path d="M17.7 8.5 L21 5.5 L40 7 L36.6 10 Z" fill="#f08058"/>
<path d="M6.5 28.5 L35.4 30 L35.4 49.6 L6.5 48 Z" fill="#e0603a"/>
<path d="M6.5 28.5 L11 25.5 L38 27 L35.4 30 Z" fill="#f07e56"/>
<path d="M35.4 30 L38 27 L38 47 L35.4 49.6 Z" fill="#a8401f"/>
<path d="M36.6 29 L66 31" stroke="#b84a28" stroke-width="0.8"/>
<g fill="#f4e8e0"><rect x="30" y="21" width="4" height="2"/><rect x="52" y="24" width="4" height="2"/><rect x="21" y="43" width="4" height="2"/><rect x="39" y="35" width="3" height="3.5"/>
<rect x="19" y="10.5" width="4" height="1.2" opacity="0.7"/><rect x="38.5" y="12" width="4" height="1.2" opacity="0.7"/><rect x="8" y="31" width="4" height="1.2" opacity="0.7"/></g>
</svg>
<svg style="position:absolute;left:346.00px;top:176.00px;" width="56" height="70" viewBox="0 0 56 70">
<defs>
<radialGradient id="ph" cx="0.4" cy="0.3" r="0.7"><stop offset="0" stop-color="#fff4e0"/><stop offset="0.5" stop-color="#f8cf8e"/><stop offset="1" stop-color="#e6a352"/></radialGradient>
<radialGradient id="pb" cx="0.5" cy="0.35" r="0.75"><stop offset="0" stop-color="#f6faff"/><stop offset="0.55" stop-color="#cfe2fc"/><stop offset="1" stop-color="#5b95f2"/></radialGradient>
</defs>
<path d="M5 58 Q3 40 14 33 Q20 30 27 31 Q34 30 40 33 Q51 40 50 58 Q50 66 28 66.5 Q5 66 5 58 Z" fill="url(#pb)" stroke="#2563e0" stroke-width="1.6"/>
<path d="M22 32 L27 45 L32 32 Z" fill="#cfe0f8"/>
<path d="M16 33 L23 38 L27 33 Z M38 33 L31 38 L27 33 Z" fill="#e8f1fd" stroke="#9dbcea" stroke-width="0.5"/><path d="M23.2 35 L31.7 35 L33 52 L27.5 59.5 L22 52 Z" fill="#d42a2a"/><path d="M24 40 L32 44 M23 47 L32.5 50 M31 38 L23 44 M32 46 L23 51" stroke="#f06060" stroke-width="0.7" opacity="0.7"/>
<circle cx="27" cy="19.8" r="16" fill="url(#ph)" stroke="#c98a3e" stroke-width="1.2"/>
<rect x="35" y="43" width="6" height="7" rx="1" fill="#cfe3fb" stroke="#9fc2ef" stroke-width="0.5"/>
</svg>
<svg style="position:absolute;left:444.00px;top:190.00px;" width="54" height="44" viewBox="0 0 54 44">
<path d="M2.6 22 L21 32.9 L22 40.7 L2.6 30 Z" fill="#dde4d4"/>
<path d="M2.6 24.5 L21.5 35.5 M2.6 27 L21.8 38" stroke="#a8b498" stroke-width="0.6"/>
<path d="M21 32.9 L50.5 11.4 L50.5 19 L22 40.7 Z" fill="#a3b093"/>
<path d="M21.5 35.5 L50.5 14 M21.8 38 L50.5 16.5" stroke="#7f8c70" stroke-width="0.6"/>
<path d="M2.6 22 L33.8 3.2 L50.5 11.4 L21 32.9 Z" fill="#c6d0b8"/>
<path d="M7 22 L33.5 6.2 L46 12 L21 29.5 Z" fill="#96a584"/>
<ellipse cx="27" cy="17" rx="6.5" ry="4" fill="#d2dac6" transform="rotate(-30 27 17)"/>
<ellipse cx="14" cy="23.5" rx="3" ry="2" fill="#c2ccb4" transform="rotate(-30 14 23.5)"/>
<ellipse cx="40" cy="10" rx="3" ry="2" fill="#c2ccb4" transform="rotate(-30 40 10)"/>
<path d="M19.8 11.7 L24.4 8.8 L41.7 17.8 L37.2 21.1 Z" fill="#8fe040"/>
<path d="M37.2 21.1 L41.7 17.8 L41.7 25.4 L37.8 28.6 Z" fill="#6cbc2e"/>
</svg>
<svg style="position:absolute;left:538.00px;top:183.00px;" width="70" height="60" viewBox="0 0 70 60">
<defs><linearGradient id="nb" x1="0.2" y1="0" x2="0.6" y2="1"><stop offset="0" stop-color="#f8cc5c"/><stop offset="0.6" stop-color="#eda040"/><stop offset="1" stop-color="#e08a38"/></linearGradient></defs>
<rect x="10" y="4.5" width="57" height="52" fill="#e9e9e9"/>
<rect x="7.2" y="3.2" width="58.6" height="52.7" fill="url(#nb)"/>
<rect x="7.2" y="3.2" width="3" height="52.7" fill="#d08a3a"/>
<path d="M38 3.2 L44 3.2 L30 55.9 L26 55.9 Z" fill="#f7c158" opacity="0.5"/>
<g stroke="#555" stroke-width="2" fill="none" stroke-linecap="round">
<path d="M4 13.1 L11 13.1"/><path d="M4 23.7 L11 23.7"/><path d="M4 34.8 L11 34.8"/><path d="M4 45.9 L11 45.9"/></g>
<g fill="#333"><circle cx="11" cy="13.1" r="1.6"/><circle cx="11" cy="23.7" r="1.6"/><circle cx="11" cy="34.8" r="1.6"/><circle cx="11" cy="45.9" r="1.6"/></g>
</svg>
<svg style="position:absolute;left:646.00px;top:176.00px;" width="56" height="72" viewBox="0 0 56 72">
<defs><linearGradient id="cb" x1="0" y1="0" x2="0" y2="1"><stop offset="0" stop-color="#dcdce0"/><stop offset="1" stop-color="#a4a4a8"/></linearGradient>
<linearGradient id="ck" x1="0" y1="0" x2="0" y2="1"><stop offset="0" stop-color="#b8b8b8"/><stop offset="1" stop-color="#909090"/></linearGradient></defs>
<rect x="2.5" y="1.6" width="51.5" height="68.4" rx="3" fill="url(#cb)" stroke="#707070" stroke-width="1"/>
<rect x="2.5" y="1.6" width="51.5" height="23.5" rx="3" fill="#3a3a3a"/>
<rect x="5.5" y="7.2" width="45" height="16" rx="1" fill="#c4c4be"/>
<text x="7" y="20.5" font-family="Liberation Sans" font-size="13" fill="#a6a6a0" textLength="17" lengthAdjust="spacingAndGlyphs">000</text>
<text x="24.5" y="20.5" font-family="Liberation Sans" font-size="13" fill="#4a4a48" textLength="24" lengthAdjust="spacingAndGlyphs">1250</text>
<g fill="#2c2c2c">
<rect x="6.5" y="28" width="7.5" height="7" rx="1"/><rect x="6.5" y="37.5" width="7.5" height="7" rx="1"/><rect x="6.5" y="47" width="7.5" height="7" rx="1"/>
<rect x="42.5" y="28" width="7.5" height="7" rx="1"/><rect x="42.5" y="37.5" width="7.5" height="7" rx="1"/><rect x="42.5" y="47" width="7.5" height="16.5" rx="1"/>
<rect x="33.5" y="56.5" width="7.5" height="7" rx="1"/></g>
<g fill="url(#ck)">
<rect x="15.5" y="28" width="7.5" height="7" rx="1"/><rect x="24.5" y="28" width="7.5" height="7" rx="1"/><rect x="33.5" y="28" width="7.5" height="7" rx="1"/>
<rect x="15.5" y="37.5" width="7.5" height="7" rx="1"/><rect x="24.5" y="37.5" width="7.5" height="7" rx="1"/><rect x="33.5" y="37.5" width="7.5" height="7" rx="1"/>
<rect x="15.5" y="47" width="7.5" height="7" rx="1"/><rect x="24.5" y="47" width="7.5" height="7" rx="1"/><rect x="33.5" y="47" width="7.5" height="7" rx="1"/>
<rect x="15.5" y="56.5" width="7.5" height="7" rx="1"/><rect x="24.5" y="56.5" width="7.5" height="7" rx="1"/></g>
<rect x="6.5" y="56.5" width="7.5" height="7" rx="1" fill="#d02a2a"/>
</svg>
<svg style="position:absolute;left:734.00px;top:180.00px;" width="76" height="64" viewBox="0 0 76 64">
<defs><linearGradient id="rb" x1="0" y1="0" x2="1" y2="0"><stop offset="0" stop-color="#b0c8e2"/><stop offset="1" stop-color="#8eacd0"/></linearGradient>
<linearGradient id="ry" x1="0" y1="0" x2="0" y2="1"><stop offset="0" stop-color="#f2d888"/><stop offset="1" stop-color="#e2bc58"/></linearGradient></defs>
<path d="M7.2 41.7 L41.1 45.6 L39.4 57.8 L7.8 52.2 Z" fill="#c2d6ea"/>
<path d="M41.1 45.6 L71.7 30 L71.1 42.8 L39.4 57.8 Z" fill="url(#rb)"/>
<path d="M9 47 L38 50.5" stroke="#9fb8d4" stroke-width="0.6"/>
<circle cx="34.5" cy="53.3" r="0.9" fill="#666"/>
<path d="M7.2 41.7 L9.4 37.2 L41.1 43.3 L41.1 45.6 Z" fill="#d8d8d6"/>
<path d="M41.1 43.3 L71.1 28 L71.7 30 L41.1 45.6 Z" fill="#c4c4c4"/>
<path d="M9.4 37.2 L25.6 26.7 L70 26.7 L71.1 28 L41.1 43.3 Z" fill="#e9e9e7"/>
<path d="M26.1 23.9 L36.7 13.9 L66.7 15 L69.4 26.1 L57.2 29.4 L26.7 26.7 Z" fill="url(#ry)"/>
<path d="M30 20.6 L57.8 22.8 L57.2 27.2 L30 25 Z" fill="#3b4540"/>
<rect x="51" y="23.5" width="4" height="2.5" fill="#4a8a60"/>
<path d="M38.9 4.4 L56 3.8 Q59.5 5.5 56.5 9 L52.2 11.1 L50 16.7 L38.9 15.6 Z" fill="#f4f4f4" stroke="#b4b4b4" stroke-width="0.6"/>
<g fill="#f8f8f8" stroke="#c0c0c0" stroke-width="0.4">
<rect x="20" y="29" width="3" height="2"/><rect x="24" y="28" width="3" height="2"/><rect x="28" y="27.5" width="3" height="2"/><rect x="32" y="27.5" width="3" height="2"/>
<rect x="19" y="32" width="3" height="2"/><rect x="23" y="31" width="3" height="2"/><rect x="27" y="30.5" width="3" height="2"/><rect x="31" y="30.5" width="3" height="2"/>
<rect x="22" y="34.5" width="3" height="2"/><rect x="26" y="34" width="3" height="2"/><rect x="30" y="33.5" width="3" height="2"/>
<rect x="16" y="35" width="5" height="2"/></g>
<rect x="33.3" y="37" width="6" height="3" fill="#7cc880"/>
<rect x="41.5" y="31" width="6" height="2.5" fill="#a8c8ec"/><rect x="40" y="34.5" width="5" height="2.5" fill="#a8c8ec"/>
</svg>
<div style="position:absolute;left:384.00px;top:377.50px;width:99.30px;height:17.80px;background:transparent;box-sizing:border-box;border:2px solid #217346;"></div>
<div style="position:absolute;left:481.00px;top:393.00px;width:4.00px;height:4.00px;background:#217346;border:1px solid #fff;box-sizing:border-box;"></div>
<svg style="position:absolute;left:479.00px;top:388.00px;" width="13" height="13" viewBox="0 0 13 13"><path d="M6.5 0.5 V12.5 M0.5 6.5 H12.5" stroke="#000" stroke-width="2"/></svg>
<div style="position:absolute;left:1009.70px;top:161.75px;width:14.30px;height:375.25px;background:#e6e6e6;"></div>
<div style="position:absolute;left:1009.20px;top:177.60px;width:1.00px;height:359.40px;background:#c6c6c6;"></div>
<div style="position:absolute;left:1012.00px;top:164.00px;width:11.00px;height:362.00px;background:#ffffff;box-sizing:border-box;border:1px solid #d4d4d4;"></div>
<div style="position:absolute;left:1012.50px;top:469.50px;width:10.00px;height:56.50px;background:#dcdcdc;"></div>
<div style="position:absolute;left:1012.00px;top:526.00px;width:11.00px;height:11.00px;background:#ffffff;box-sizing:border-box;border:1px solid #d4d4d4;"></div>
<svg style="position:absolute;left:1013.00px;top:167.00px;" width="9" height="6" viewBox="0 0 9 6"><path d="M1 5 L8 5 L4.5 1.5 Z" fill="#666"/></svg>
<svg style="position:absolute;left:1013.00px;top:529.00px;" width="9" height="6" viewBox="0 0 9 6"><path d="M1 1 L8 1 L4.5 4.5 Z" fill="#666"/></svg>
<div style="position:absolute;left:628.00px;top:543.60px;width:382.80px;height:11.40px;background:#ffffff;box-sizing:border-box;border:1px solid #c8c8c8;"></div>
<div style="position:absolute;left:963.00px;top:544.60px;width:34.00px;height:9.40px;background:#dcdcdc;"></div>
<div style="position:absolute;left:639.00px;top:543.60px;width:1.00px;height:11.40px;background:#c8c8c8;"></div>
<div style="position:absolute;left:997.00px;top:543.60px;width:1.00px;height:11.40px;background:#c8c8c8;"></div>
<svg style="position:absolute;left:630.00px;top:545.00px;" width="8" height="9" viewBox="0 0 8 9"><path d="M6 1 L6 8 L2.5 4.5 Z" fill="#444"/></svg>
<svg style="position:absolute;left:999.00px;top:545.00px;" width="8" height="9" viewBox="0 0 8 9"><path d="M2 1 L2 8 L5.5 4.5 Z" fill="#444"/></svg>
<div style="position:absolute;left:614.80px;top:545.50px;width:1.20px;height:1.20px;background:#999;"></div>
<div style="position:absolute;left:614.80px;top:549.00px;width:1.20px;height:1.20px;background:#999;"></div>
<div style="position:absolute;left:614.80px;top:552.50px;width:1.20px;height:1.20px;background:#999;"></div>
<svg style="position:absolute;left:527.00px;top:541.00px;" width="15" height="15" viewBox="0 0 15 15"><circle cx="7.5" cy="7.5" r="6" fill="none" stroke="#b8b8b8" stroke-width="1"/><path d="M7.5 4 V11 M4 7.5 H11" stroke="#b8b8b8" stroke-width="1.2"/></svg>
<div style="position:absolute;left:807.00px;top:560.80px;width:27.00px;height:15.20px;background:#d4d4d4;"></div>
<svg style="position:absolute;left:813.00px;top:563.00px;" width="14" height="12" viewBox="0 0 14 12"><rect x="1" y="0.5" width="12" height="11" fill="none" stroke="#666"/><path d="M1 4.2 H13 M1 7.8 H13 M5 0.5 V11.5 M9 0.5 V11.5" stroke="#666" stroke-width="1"/></svg>
<svg style="position:absolute;left:842.00px;top:563.00px;" width="14" height="12" viewBox="0 0 14 12"><rect x="1" y="0.5" width="12" height="11" fill="none" stroke="#666"/><rect x="4" y="2.5" width="6" height="7" fill="none" stroke="#666"/></svg>
<svg style="position:absolute;left:870.00px;top:563.00px;" width="14" height="12" viewBox="0 0 14 12"><rect x="1" y="0.5" width="12" height="11" fill="none" stroke="#666"/><path d="M6 0.5 V6.5 H13" fill="none" stroke="#666"/></svg>
<div style="position:absolute;left:895.50px;top:567.60px;width:5.00px;height:1.20px;background:#555;"></div>
<div style="position:absolute;left:902.00px;top:567.80px;width:76.00px;height:0.80px;background:#aaaaaa;"></div>
<div style="position:absolute;left:939.00px;top:563.50px;width:3.00px;height:9.50px;background:#444;"></div>
<div style="position:absolute;left:980.50px;top:567.60px;width:8.00px;height:1.20px;background:#555;"></div>
<div style="position:absolute;left:983.90px;top:564.20px;width:1.20px;height:8.00px;background:#555;"></div>
<div id="t108" style="position:absolute;left:998.60px;top:564.70px;font-size:9.8px;line-height:9.8px;font-family:'Liberation Sans', sans-serif;font-weight:400;color:#555;white-space:nowrap;transform:scaleX(0.8539);transform-origin:0 0;-webkit-text-stroke:0.18px #555;">100%</div>
<svg style="position:absolute;left:826.00px;top:448.00px;" width="146" height="110" viewBox="0 0 146 110">
<defs>
<radialGradient id="ws" cx="0.45" cy="0.4" r="0.7"><stop offset="0" stop-color="#b4e2fa"/><stop offset="0.6" stop-color="#78c0ee"/><stop offset="1" stop-color="#4a9ad8"/></radialGradient>
<linearGradient id="wg" x1="0" y1="0" x2="0" y2="1"><stop offset="0" stop-color="#c6f0a4"/><stop offset="0.5" stop-color="#8ed866"/><stop offset="1" stop-color="#5cba38"/></linearGradient>
<linearGradient id="wt" x1="0" y1="0" x2="0" y2="1"><stop offset="0" stop-color="#7889a6"/><stop offset="1" stop-color="#5f6f8c"/></linearGradient>
<linearGradient id="wk" x1="0" y1="0" x2="0" y2="1"><stop offset="0" stop-color="#e0e0e0"/><stop offset="1" stop-color="#a8a8a8"/></linearGradient>
<filter id="wsh" x="-50%" y="-100%" width="200%" height="300%"><feGaussianBlur stdDeviation="2.6"/></filter><filter id="wsh2" x="-30%" y="-30%" width="160%" height="160%"><feGaussianBlur stdDeviation="1.4"/></filter>
</defs>
<g opacity="0.9"><path d="M13.80 3.75 Q-7.00 24.00 13.80 44.25 Q5.40 24.00 13.80 3.75 Z" fill="url(#wg)"/><path d="M128.00 3.75 Q148.80 24.00 128.00 44.25 Q136.40 24.00 128.00 3.75 Z" fill="url(#wg)"/><path d="M22.00 6.30 Q5.60 24.00 22.00 41.70 Q17.20 24.00 22.00 6.30 Z" fill="url(#wg)"/><path d="M119.80 6.30 Q136.20 24.00 119.80 41.70 Q124.60 24.00 119.80 6.30 Z" fill="url(#wg)"/><path d="M30.50 11.50 Q15.50 24.00 30.50 36.50 Q26.70 24.00 30.50 11.50 Z" fill="url(#wg)"/><path d="M111.30 11.50 Q126.30 24.00 111.30 36.50 Q115.10 24.00 111.30 11.50 Z" fill="url(#wg)"/><path d="M38.80 15.70 Q26.20 24.00 38.80 32.30 Q36.80 24.00 38.80 15.70 Z" fill="url(#wg)"/><path d="M103.00 15.70 Q115.60 24.00 103.00 32.30 Q105.00 24.00 103.00 15.70 Z" fill="url(#wg)"/><path d="M47.00 18.75 Q34.80 24.00 47.00 29.25 Q44.80 24.00 47.00 18.75 Z" fill="url(#wg)"/><path d="M94.80 18.75 Q107.00 24.00 94.80 29.25 Q97.00 24.00 94.80 18.75 Z" fill="url(#wg)"/></g>
<rect x="50.3" y="6.2" width="41.2" height="31.2" rx="1.5" fill="#8a8a8a"/>
<rect x="53" y="8.7" width="35.8" height="25.5" fill="url(#ws)"/>
<rect x="65" y="37.4" width="13" height="3.5" fill="#c4c4c4"/>
<rect x="60" y="40.5" width="23" height="3" fill="#d6d6d6"/>
<rect x="50" y="44" width="40" height="11.5" rx="1" fill="url(#wk)"/>
<path d="M50 49.5 H90" stroke="#e8e8e8" stroke-width="0.8"/>
<text x="1.3" y="85.75" font-family="Liberation Sans" font-weight="700" font-size="34" fill="url(#wt)" textLength="63.5" lengthAdjust="spacingAndGlyphs">EXPERTO</text>
<g filter="url(#wsh)"><ellipse cx="88" cy="90" rx="20" ry="5" fill="#333" opacity="0.45"/><ellipse cx="84" cy="96" rx="5" ry="4" fill="#333" opacity="0.3"/></g>
<g filter="url(#wsh2)"><text x="69.5" y="87" font-family="Liberation Sans" font-size="30" font-weight="700" fill="#555" opacity="0.8" textLength="40.5" lengthAdjust="spacingAndGlyphs">digital</text></g>
<text x="69.5" y="85.75" font-family="Liberation Sans" font-size="30" font-weight="700" fill="#fbfbfb" textLength="40.5" lengthAdjust="spacingAndGlyphs">digital</text>
<text x="110.7" y="85.75" font-family="Liberation Sans" font-weight="700" font-size="34" fill="url(#wt)" textLength="31.6" lengthAdjust="spacingAndGlyphs">.NET</text>
</svg>
<div style="position:absolute;left:1022.60px;top:0.00px;width:1.40px;height:576.00px;background:#2e2e2e;"></div>
<div style="position:absolute;left:1022.00px;top:0.00px;width:1.00px;height:576.00px;background:rgba(0,0,0,0.3);"></div>
</body></html>
